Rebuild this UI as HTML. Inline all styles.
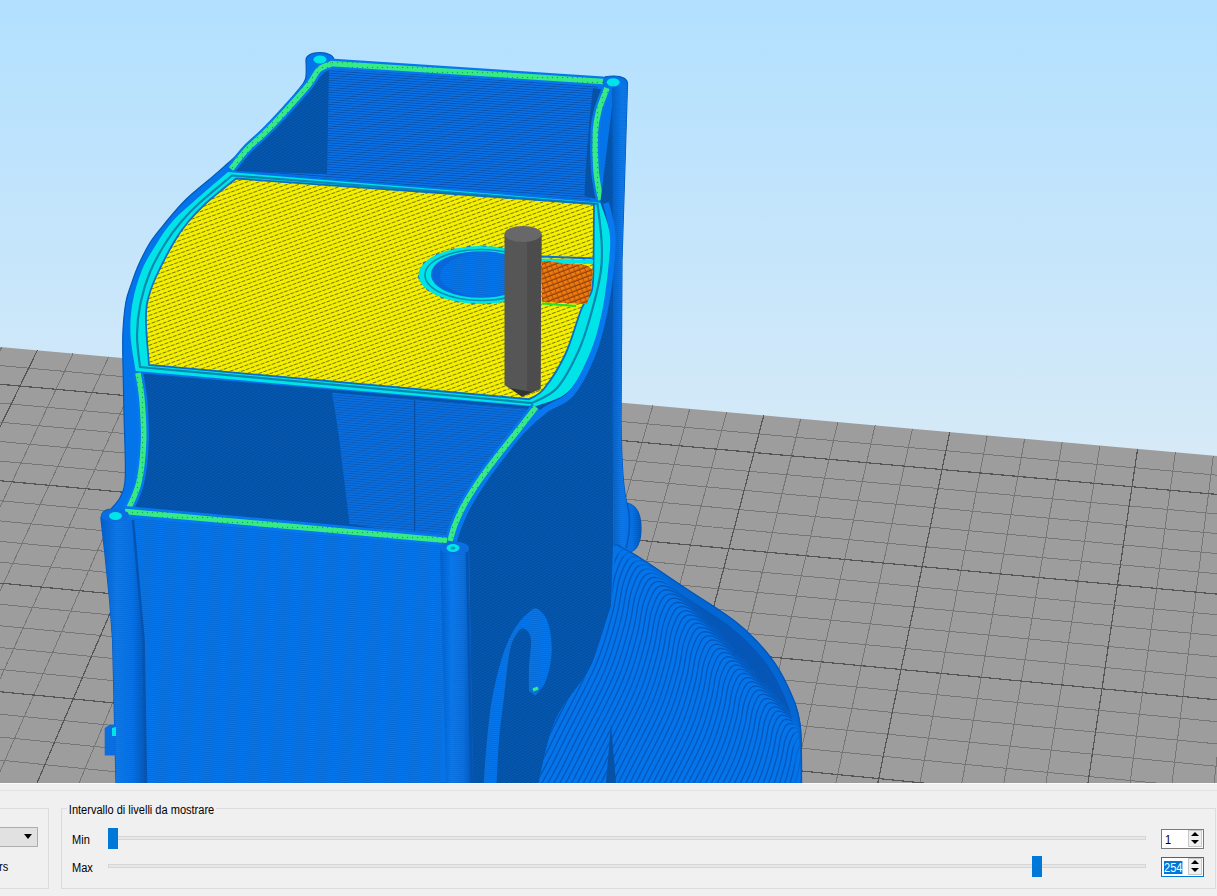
<!DOCTYPE html><html><head><meta charset="utf-8"><style>
html,body{margin:0;padding:0;width:1217px;height:896px;overflow:hidden;background:#f0f0f0;font-family:"Liberation Sans",sans-serif;}
svg{position:absolute;left:0;top:0;display:block}
.t{position:absolute;font-size:12px;color:#000;white-space:nowrap;line-height:14px;transform:scaleX(0.92);transform-origin:0 0}
.b{position:absolute;box-sizing:border-box}
</style></head><body>
<svg width="1217" height="783" viewBox="0 0 1217 783">
<defs>
<linearGradient id="sky" x1="0" y1="0" x2="0" y2="1"><stop offset="0" stop-color="#b2e0ff"/><stop offset="1" stop-color="#f0f1f2"/></linearGradient>
<pattern id="yel" width="5.2" height="4" patternUnits="userSpaceOnUse" patternTransform="rotate(-20)"><rect width="5.2" height="4" fill="#f4f000"/><rect x="0.6" y="3.05" width="4" height="0.95" fill="#747000"/></pattern>
<pattern id="wL" width="8" height="2" patternUnits="userSpaceOnUse" patternTransform="rotate(5)"><rect width="8" height="2" fill="#0678f0"/><rect y="1.35" width="8" height="0.65" fill="#0562c6"/></pattern>
<pattern id="wB" width="8" height="2.4" patternUnits="userSpaceOnUse" patternTransform="rotate(4)"><rect width="8" height="2.4" fill="#0a70e4"/><rect y="1.6" width="8" height="0.8" fill="#0852ae"/></pattern>
<pattern id="wD" width="8" height="2.4" patternUnits="userSpaceOnUse" patternTransform="rotate(-30)"><rect width="8" height="2.4" fill="#0458b2"/><rect y="1.7" width="8" height="0.7" fill="#034a98"/></pattern>
<pattern id="wM" width="8" height="2.4" patternUnits="userSpaceOnUse" patternTransform="rotate(5)"><rect width="8" height="2.4" fill="#0a6ede"/><rect y="1.7" width="8" height="0.7" fill="#0858b6"/></pattern>
<pattern id="orng" width="5" height="4.6" patternUnits="userSpaceOnUse" patternTransform="rotate(-21)"><rect width="5" height="4.6" fill="#f07a10"/><rect y="3.3" width="5" height="1.3" fill="#8a4006"/><rect x="3.8" y="0" width="1.2" height="3.3" fill="#b85808"/></pattern>
<linearGradient id="cyl" x1="0" y1="0" x2="1" y2="0"><stop offset="0" stop-color="#0562cc"/><stop offset="0.35" stop-color="#0a7ef6"/><stop offset="0.7" stop-color="#0874ea"/><stop offset="1" stop-color="#0558b8"/></linearGradient>
<pattern id="stp" width="8" height="2" patternUnits="userSpaceOnUse" patternTransform="rotate(3)"><rect y="1.3" width="8" height="0.7" fill="#03408a" fill-opacity="0.35"/></pattern>
<pattern id="grn" width="5" height="5" patternUnits="userSpaceOnUse"><rect width="5" height="5" fill="#36ea86"/><circle cx="2.5" cy="2.5" r="0.7" fill="#24a060"/></pattern>
</defs>
<rect x="0" y="0" width="1217" height="783" fill="url(#sky)"/>
<polygon points="-69.2,340.9 1365.5,469.4 1306.1,1203.9 -420.8,1016" fill="#9d9d9d"/>
<path d="M-69.2,340.9 L-420.8,1016 M-33.8,344 L-378.4,1020.6 M1.7,347.2 L-336,1025.2 M73,353.6 L-250.8,1034.5 M108.7,356.8 L-208.1,1039.1 M144.5,360 L-165.3,1043.8 M180.3,363.2 L-122.3,1048.5 M252.3,369.7 L-36.2,1057.8 M288.3,372.9 L7,1062.5 M324.5,376.1 L50.4,1067.3 M360.7,379.4 L93.8,1072 M433.3,385.9 L181,1081.5 M469.7,389.1 L224.7,1086.2 M506.2,392.4 L268.5,1091 M542.8,395.7 L312.5,1095.8 M616.1,402.3 L400.7,1105.4 M652.9,405.5 L444.9,1110.2 M689.8,408.8 L489.3,1115 M726.7,412.2 L533.8,1119.9 M800.7,418.8 L623,1129.6 M837.9,422.1 L667.8,1134.5 M875.1,425.4 L712.7,1139.3 M912.4,428.8 L757.7,1144.2 M987.2,435.5 L848,1154.1 M1024.7,438.8 L893.3,1159 M1062.2,442.2 L938.7,1163.9 M1099.9,445.6 L984.3,1168.9 M1175.4,452.3 L1075.7,1178.8 M1213.3,455.7 L1121.5,1183.8 M1251.2,459.1 L1167.5,1188.8 M1289.3,462.5 L1213.6,1193.9 M1365.5,469.4 L1306.1,1203.9 M-78.4,358.5 L1364,488.4 M-97,394.2 L1360.9,527 M-106.5,412.4 L1359.3,546.6 M-116.1,430.8 L1357.7,566.5 M-125.7,449.4 L1356.1,586.6 M-145.4,487.1 L1352.7,627.5 M-155.4,506.3 L1351.1,648.3 M-165.5,525.7 L1349.4,669.3 M-175.7,545.4 L1347.6,690.6 M-196.5,585.3 L1344.1,734 M-207.1,605.6 L1342.3,756.1 M-217.8,626.2 L1340.5,778.4 M-228.6,647 L1338.7,801 M-250.7,689.3 L1335,847 M-261.9,710.8 L1333.1,870.5 M-273.2,732.6 L1331.2,894.2 M-284.7,754.7 L1329.2,918.2 M-308.1,799.6 L1325.2,967.2 M-320,822.5 L1323.2,992.2 M-332.1,845.6 L1321.2,1017.4 M-344.3,869.1 L1319.1,1043.1 M-369.1,916.8 L1314.9,1095.3 M-381.8,941.1 L1312.7,1121.9 M-394.6,965.8 L1310.5,1148.9 M-407.6,990.7 L1308.3,1176.2" stroke="#767676" stroke-width="1" fill="none" shape-rendering="crispEdges"/>
<path d="M37.3,350.4 L-293.5,1029.8 M216.3,366.4 L-79.3,1053.1 M397,382.6 L137.3,1076.7 M579.4,399 L356.5,1100.6 M763.7,415.5 L578.3,1124.7 M949.7,432.1 L802.8,1149.1 M1137.6,449 L1029.9,1173.9 M1327.4,466 L1259.8,1198.9 M-87.7,376.3 L1362.5,507.6 M-135.5,468.1 L1354.4,606.9 M-186.1,565.2 L1345.9,712.2 M-239.6,668 L1336.8,823.9 M-296.3,777 L1327.2,942.6 M-356.6,892.8 L1317,1069 M-420.8,1016 L1306.1,1203.9" stroke="#555555" stroke-width="1.2" fill="none" shape-rendering="crispEdges"/>
<path d="M320,52.5 C328,52.5 334,56 334,60 L601,79 C603,77 608,76 614,76 C622,76 627.5,79 627.5,84 L622,260 L621,420 C621.5,460 623,490 627,503 C636,505 641,514 641,528 C641,542 637,550 630,552 L616,544 C617.8,546 624.9,548.5 637,556 C649.1,563.5 670,578 686.5,589 C703,600 722.1,611 735.8,622 C749.5,633 759.9,644 768.7,655 C777.5,666 783.2,676.5 788.4,688 C793.6,699.5 797.8,708.2 800,724 C802.2,739.8 801.2,773.2 801.5,783 L116,783 L112.6,640 L109.6,600 L104.6,551 L101,519 C101,513 105,509 111,509 C112.6,507 118,502.3 120.4,497 C122.8,491.7 124.7,491 125.3,477 C125.9,463 124.4,433.2 124,413 C123.6,392.8 123,369.8 122.8,356 C122.6,342.2 122.5,338.9 123,330 C123.5,321.1 124.5,310 125.8,302.5 C127.1,295 128.9,291.2 131,285 C133.1,278.8 135.3,272.1 138.5,265 C141.7,257.9 145.5,249.7 150.1,242.5 C154.7,235.3 160.7,228.5 166,222 C171.3,215.5 177.5,208.3 182,203.5 C186.5,198.7 188.7,196.8 193,193 C197.3,189.2 202.3,185.3 208,180.5 C213.7,175.7 220.5,169.7 227,164 C233.5,158.3 240.5,152.3 246.9,146.2 C253.3,140.2 259.4,134 265.6,127.5 C271.9,121 279.2,113.2 284.4,107.2 C289.6,101.2 293.4,96.3 296.9,91.6 C300.4,86.9 304,84.3 305.5,79 C307,73.7 305.9,63.2 306,60 C306,56 311,52.5 320,52.5 Z" fill="#0474ea" stroke="#0558bc" stroke-width="1.2"/>
<path d="M329,66 L598,84 L590,200 L233,171 Z" fill="url(#wB)"/>
<path d="M233,171 C236.7,168.7 244.3,158.3 250,152 C255.7,145.7 261.2,141 268,134 C274.8,127 283.5,118.2 291,110 C298.5,101.8 306.7,92 313,85 C319.3,78 326.3,70.8 329,68 L327,174 Z" fill="url(#wD)"/>
<path d="M593,88 C590,110 586,160 584.6,196 L600,200 C598,160 599,120 606,90 Z" fill="#0852a6"/>
<path d="M606,90 C598,120 596,160 600,200" stroke="#0a6ee0" stroke-width="4" fill="none"/>
<path d="M330,63.5 L603,81.5" stroke="#0878ee" stroke-width="10" fill="none"/>
<path d="M330,63.5 L603,81.5" stroke="url(#grn)" stroke-width="5.5" fill="none"/>
<path d="M231,169 C233.7,165.7 241.2,155.6 247,149.4 C252.8,143.2 258.9,138.8 265.6,132 C272.4,125.2 280.2,116.8 287.5,108.8 C294.8,100.7 304.2,90.3 309.4,83.8 C314.6,77.2 315.1,73 318.8,69.7 C322.4,66.4 329,65 331,64" stroke="#0878ee" stroke-width="10" fill="none"/>
<path d="M231,169 C233.7,165.7 241.2,155.6 247,149.4 C252.8,143.2 258.9,138.8 265.6,132 C272.4,125.2 280.2,116.8 287.5,108.8 C294.8,100.7 304.2,90.3 309.4,83.8 C314.6,77.2 315.1,73 318.8,69.7 C322.4,66.4 329,65 331,64" stroke="url(#grn)" stroke-width="5.5" fill="none"/>
<path d="M607,88 C605.7,91.7 600.9,102.8 599,110 C597.1,117.2 595.9,121.4 595.4,131.4 C594.9,141.4 595.1,158.6 596,170 C596.9,181.4 599.9,195 600.7,200" stroke="#0878ee" stroke-width="10" fill="none"/>
<path d="M607,88 C605.7,91.7 600.9,102.8 599,110 C597.1,117.2 595.9,121.4 595.4,131.4 C594.9,141.4 595.1,158.6 596,170 C596.9,181.4 599.9,195 600.7,200" stroke="url(#grn)" stroke-width="5.5" fill="none"/>
<path d="M600.3,202.8 L614,90 L613,260 L613,420 L613,546 L611,606 C609.2,611.7 603.8,629.1 600,640 C596.2,650.9 595.5,658 588,671.5 C580.5,685 563.2,702.4 555,721 C546.8,739.6 541.3,772.7 538.6,783 L473,783 L469,550 L449,541 C450,538.3 452.4,531 454.9,525 C457.4,519 460,512.5 464.1,505 C468.2,497.5 474,488.3 479.7,480 C485.4,471.7 491.9,463.3 498.3,455 C504.7,446.7 512,438.1 518.2,430 C524.4,421.9 532.8,410.2 535.7,406.2 C541.1,403.8 559.2,400.2 568.2,391.5 C577.2,382.8 584,366.9 589.6,354 C595.2,341.1 598.5,328.1 601.6,313.8 C604.7,299.5 606.9,281.4 608.3,268 C609.6,254.6 609.5,239.2 609.7,233.5 Z" fill="url(#wD)"/>
<path d="M612,88 L627.5,84 L622,260 L621,420 C621.5,460 623,490 627,503 C636,505 641,514 641,528 C641,542 637,550 630,552 L613,546 C614,530 613,470 612.5,420 L613,260 Z" fill="url(#cyl)"/>
<path d="M612,88 L627.5,84 L622,260 L621,420 C621.5,460 623,490 627,503 C636,505 641,514 641,528 C641,542 637,550 630,552 L613,546 C614,530 613,470 612.5,420 L613,260 Z" fill="url(#stp)"/>
<path d="M627,503 C630,512 631,530 626,548" stroke="#0558b8" stroke-width="1.5" fill="none"/>
<path d="M606,203 C607.1,208 611.7,222.2 612.5,233 C613.3,243.8 612.4,254.5 611,268 C609.6,281.5 607.2,299.3 604,314 C600.8,328.7 597.5,342.7 592,356 C586.5,369.3 578.8,385 571,394 C563.2,403 553.2,403.8 545,410 C536.8,416.2 529.2,423.3 522,431 C514.8,438.7 508.4,447.7 502,456 C495.6,464.3 489.2,472.7 483.5,481 C477.8,489.3 472.1,498.5 468,506 C463.9,513.5 461.3,520.2 459,526 C456.7,531.8 454.8,538.5 454,541" stroke="#0878ee" stroke-width="6" fill="none"/>
<path d="M228,172 L600.3,202.8 C601.9,207.9 608.4,222.6 609.7,233.5 C611,244.4 609.6,254.6 608.3,268 C606.9,281.4 604.7,299.5 601.6,313.8 C598.5,328.1 595.2,341.1 589.6,354 C584,366.9 577.2,382.8 568.2,391.5 C559.2,400.2 541.1,403.8 535.7,406.2 L135.7,371 C134.8,365 131,346.4 130.5,335 C130,323.6 130.7,313.3 132.6,302.5 C134.5,291.7 137.9,280 142,270 C146.1,260 152.4,250.5 157.4,242.5 C162.4,234.5 166.1,228.7 172,222 C177.9,215.3 183.4,210.8 192.7,202.5 C202,194.2 222.1,177.1 228,172 Z" fill="#00e4e8"/>
<path d="M232,175.5 L597.5,204 C598.2,210 600.9,229 601.5,240 C602.1,251 602.6,258 601,270 C599.4,282 595.4,298.5 591.6,312 C587.9,325.5 584.3,338.3 578.5,351 C572.7,363.7 564.8,379.3 557,388 C549.2,396.7 536.2,400.5 532,403 L140,367 C139.5,361.7 136.9,345.8 137,335 C137.1,324.2 138.4,313 140.6,302.5 C142.8,292 145.8,282 150,272 C154.2,262 160.6,250.8 165.8,242.5 C171,234.2 175.3,228.7 181,222 C186.7,215.3 191.5,210.2 200,202.5 C208.5,194.8 226.7,180 232,175.5 Z" fill="none" stroke="#0788b0" stroke-width="2.2"/>
<path d="M236,178.5 L594,204 L593.6,257.6 C593.3,263 594,281.5 592,290 C590,298.5 586,297.8 581.6,308.5 C577.2,319.2 571.8,340.6 565.5,354 C559.2,367.4 550,381.3 544,388.8 C538,396.3 531.7,397.5 529.2,399.2 L149,365 C148.5,358.2 146.3,334.4 146,324 C145.7,313.6 145.7,310 147.2,302.5 C148.7,295 150.6,289 155,279 C159.4,269 168.2,252 173.7,242.5 C179.2,233 182.5,228.7 188,222 C193.5,215.3 198.7,209.8 206.7,202.5 C214.7,195.2 231.1,182.5 236,178.5 Z" fill="url(#yel)" stroke="#0a6ec8" stroke-width="1.8"/>
<ellipse cx="481" cy="275" rx="62.5" ry="29" fill="#00e4e8"/>
<ellipse cx="481" cy="275" rx="56" ry="25.5" fill="none" stroke="#0790b0" stroke-width="1.6"/>
<ellipse cx="481" cy="274.5" rx="49" ry="22.3" fill="url(#wL)"/>
<ellipse cx="481" cy="274.5" rx="49" ry="22.3" fill="none" stroke="#0a6ee0" stroke-width="2"/>
<path d="M433,274 C433,262 450,254 470,253 C452,258 440,266 440,276 C440,284 450,291 470,296 C448,294 433,286 433,274 Z" fill="#0866d8"/>
<ellipse cx="481" cy="275" rx="62.5" ry="29" fill="none" stroke="#0a70d8" stroke-width="1" stroke-dasharray="4 12"/>
<path d="M541,256.5 L594,258.5" stroke="#0a6ee0" stroke-width="2.2" fill="none"/>
<path d="M541,260.5 L593,262" stroke="#00e4e8" stroke-width="4" fill="none"/>
<path d="M542,261 L548,261 L561,263 L586,265 L593,270 L591,290 L587,304 L542,302 Z" fill="url(#orng)"/>
<path d="M542,303.5 L576,306" stroke="#20e030" stroke-width="2.2" fill="none"/>
<path d="M137,373 L535,407 C532.2,410.8 524.3,422 518.2,430 C512.1,438 504.7,446.7 498.3,455 C491.9,463.3 485.4,471.7 479.7,480 C474,488.3 468.2,497.5 464.1,505 C460,512.5 457.4,519.2 454.9,525 C452.4,530.8 450,537.5 449,540 L130,509 C131.7,504.2 137.7,491.3 140,480 C142.3,468.7 143.4,454.3 143.6,441 C143.8,427.7 141.6,411.3 141,400 C140.4,388.7 140.2,377.5 140,373 Z" fill="url(#wD)"/>
<path d="M332,392.5 L530,409 C527.7,412.5 521.7,422.3 516,430 C510.3,437.7 502.4,446.7 496,455 C489.6,463.3 483.2,471.7 477.5,480 C471.8,488.3 466.1,497.5 462,505 C457.9,512.5 455.5,519.3 453,525 C450.5,530.7 448,536.7 447,539 L349.6,524 C348.5,515 344.9,485.7 343,470 C341.1,454.3 339.8,442.9 338,430 C336.2,417.1 333,398.8 332,392.5 Z" fill="url(#wM)"/>
<path d="M414.7,400 L414.7,531" stroke="#074a98" stroke-width="1" fill="none"/>
<path d="M536,407 C533,410.8 524.5,422 518.2,430 C511.9,438 504.7,446.7 498.3,455 C491.9,463.3 485.4,471.7 479.7,480 C474,488.3 468.2,497.5 464.1,505 C460,512.5 457.2,519 454.9,525 C452.5,531 450.8,538.3 450,541" stroke="#0878ee" stroke-width="10.5" fill="none"/>
<path d="M536,407 C533,410.8 524.5,422 518.2,430 C511.9,438 504.7,446.7 498.3,455 C491.9,463.3 485.4,471.7 479.7,480 C474,488.3 468.2,497.5 464.1,505 C460,512.5 457.2,519 454.9,525 C452.5,531 450.8,538.3 450,541" stroke="url(#grn)" stroke-width="5.5" fill="none"/>
<path d="M138,373 C138.7,377.5 141.1,388.7 142,400 C142.9,411.3 144.1,427.3 143.6,441 C143.1,454.7 141.6,470.5 139,482 C136.4,493.5 129.8,505.3 128,510" stroke="#0878ee" stroke-width="10.5" fill="none"/>
<path d="M138,373 C138.7,377.5 141.1,388.7 142,400 C142.9,411.3 144.1,427.3 143.6,441 C143.1,454.7 141.6,470.5 139,482 C136.4,493.5 129.8,505.3 128,510" stroke="url(#grn)" stroke-width="5.5" fill="none"/>
<path d="M126.8,512 L446,541 L441,783 L146,783 L143,660 L133,520 Z" fill="url(#wL)"/>
<path d="M125,511.5 L447,540.5" stroke="#0878ee" stroke-width="11" fill="none"/>
<path d="M125,511.5 L447,540.5" stroke="url(#grn)" stroke-width="5.5" fill="none"/>
<clipPath id="bc"><path d="M616,544 C617.8,546 624.9,548.5 637,556 C649.1,563.5 670,578 686.5,589 C703,600 722.1,611 735.8,622 C749.5,633 759.9,644 768.7,655 C777.5,666 783.2,676.5 788.4,688 C793.6,699.5 797.8,708.2 800,724 C802.2,739.8 801.2,773.2 801.5,783 L538.6,783 C541.3,772.7 546.8,739.6 555,721 C563.2,702.4 580.5,685 588,671.5 C595.5,658 596.2,650.9 600,640 C603.8,629.1 609.2,611.7 611,606 Z"/></clipPath>
<path d="M616,544 C617.8,546 624.9,548.5 637,556 C649.1,563.5 670,578 686.5,589 C703,600 722.1,611 735.8,622 C749.5,633 759.9,644 768.7,655 C777.5,666 783.2,676.5 788.4,688 C793.6,699.5 797.8,708.2 800,724 C802.2,739.8 801.2,773.2 801.5,783 L538.6,783 C541.3,772.7 546.8,739.6 555,721 C563.2,702.4 580.5,685 588,671.5 C595.5,658 596.2,650.9 600,640 C603.8,629.1 609.2,611.7 611,606 Z" fill="#0474ea"/>
<g clip-path="url(#bc)"><path d="M474.8,838.9 L479.9,833.6 L487,826.4 L495.3,817.8 L504.2,808.2 L512.7,798.3 L520.2,788.4 L526.8,778.3 L532.9,767.6 L538.7,756.5 L544.4,745.2 L550,733.9 L555.6,722.8 L561.3,711.6 L567.2,700.3 L573,689 L578.5,677.9 L583.5,667.2 L587.9,657.1 L591.6,647.7 L594.8,638.7 L597.5,630.1 L599.9,622 L602,614.1 L604.1,606.6 L605.8,599.3 L607.1,592.2 L608.2,585.5 L609.3,579.2 L610.6,573.4 L612.2,568.2 L614,563.4 L615.8,558.9 L617.8,554.8 L620.2,551.5 L622.9,549.2 L626.3,548 L630.3,548.2 L634.8,549.6 L639.8,552 L645.2,555.1 L650.8,558.5 L656.6,562.2 L662.7,566.1 L669.1,570.7 L675.9,575.6 L682.8,580.8 L689.9,586.2 L697,591.5 L704.4,596.7 L712.2,602.1 L720.2,607.6 L728,613.2 L735.5,618.9 L742.5,624.8 L748.9,630.7 L755,636.8 L760.8,643 L766.2,649.3 L771.2,655.7 L775.8,662.1 L779.8,668.5 L783.4,674.8 L786.5,681.2 L789.3,687.8 L791.7,694.9 L794,702.5 L795.9,710.8 L797.4,719.4 L798.6,728.4 L799.6,737.9 L800.4,747.8 L801,758.1 L801.4,769.8 L801.6,783.2 L801.5,796.9 L801.3,809.9 L801.1,820.9 L801,828.8 M480.3,840.1 L485.3,834.8 L492.3,827.7 L500.6,819.1 L509.3,809.7 L517.8,799.9 L525.2,790.1 L531.7,780.1 L537.7,769.5 L543.5,758.5 L549.2,747.3 L554.7,736.1 L560.2,725.1 L565.9,714.1 L571.7,702.9 L577.4,691.7 L582.8,680.7 L587.8,670.1 L592.2,660.1 L595.9,650.8 L599,641.9 L601.7,633.5 L604,625.4 L606.2,617.6 L608.2,610.2 L609.9,602.9 L611.2,596 L612.3,589.3 L613.4,583.1 L614.6,577.3 L616.2,572.2 L618,567.4 L619.8,562.9 L621.8,558.9 L624.1,555.7 L626.9,553.4 L630.2,552.2 L634.1,552.4 L638.6,553.8 L643.6,556.1 L648.8,559.2 L654.4,562.6 L660.2,566.2 L666.2,570.1 L672.6,574.6 L679.2,579.5 L686.1,584.7 L693.1,589.9 L700.1,595.2 L707.5,600.4 L715.2,605.7 L723.1,611.2 L730.8,616.7 L738.3,622.4 L745.1,628.2 L751.5,634.1 L757.6,640.1 L763.3,646.2 L768.7,652.4 L773.6,658.8 L778.1,665.1 L782.1,671.5 L785.6,677.7 L788.7,684 L791.5,690.6 L793.9,697.6 L796.1,705.1 L798,713.2 L799.5,721.8 L800.7,730.7 L801.7,740.1 L802.5,749.9 L803.1,760.1 L803.5,771.7 L803.6,784.9 L803.5,798.5 L803.4,811.4 L803.2,822.3 L803.1,830.1 M485.7,841.2 L490.7,836 L497.6,828.9 L505.8,820.5 L514.5,811.2 L522.9,801.4 L530.2,791.8 L536.6,781.9 L542.6,771.4 L548.3,760.5 L553.9,749.5 L559.4,738.4 L564.8,727.5 L570.5,716.6 L576.2,705.5 L581.8,694.4 L587.2,683.5 L592.2,673 L596.5,663.2 L600.1,654 L603.2,645.2 L605.9,636.8 L608.2,628.8 L610.3,621.1 L612.3,613.7 L614,606.6 L615.3,599.7 L616.4,593.1 L617.4,586.9 L618.7,581.3 L620.2,576.2 L622,571.4 L623.8,567 L625.8,563.1 L628.1,559.8 L630.8,557.5 L634.1,556.4 L638,556.6 L642.4,558 L647.3,560.3 L652.5,563.3 L658,566.7 L663.7,570.2 L669.7,574.1 L676,578.5 L682.6,583.4 L689.4,588.5 L696.3,593.7 L703.3,598.9 L710.6,604.1 L718.2,609.3 L726,614.7 L733.7,620.2 L741,625.8 L747.8,631.5 L754.1,637.4 L760.1,643.3 L765.8,649.4 L771.1,655.6 L776,661.8 L780.4,668.1 L784.4,674.4 L787.9,680.6 L791,686.8 L793.7,693.3 L796.1,700.2 L798.2,707.7 L800.1,715.7 L801.6,724.2 L802.8,733 L803.8,742.3 L804.5,752 L805.2,762.1 L805.6,773.6 L805.7,786.6 L805.6,800.1 L805.4,812.8 L805.2,823.6 L805.2,831.3 M491.2,842.4 L496.1,837.2 L503,830.2 L511.1,821.9 L519.6,812.6 L527.9,803 L535.2,793.4 L541.5,783.7 L547.5,773.3 L553.1,762.6 L558.6,751.6 L564,740.6 L569.5,729.8 L575,719.1 L580.7,708.1 L586.3,697.1 L591.6,686.3 L596.5,676 L600.8,666.2 L604.4,657.1 L607.4,648.4 L610.1,640.1 L612.4,632.2 L614.5,624.6 L616.4,617.3 L618.1,610.2 L619.4,603.4 L620.5,596.9 L621.5,590.8 L622.7,585.2 L624.3,580.1 L626,575.5 L627.8,571.1 L629.8,567.2 L632,564 L634.7,561.7 L638,560.6 L641.8,560.7 L646.2,562.1 L651,564.4 L656.2,567.4 L661.7,570.7 L667.3,574.3 L673.2,578.1 L679.5,582.5 L686,587.3 L692.7,592.3 L699.5,597.5 L706.5,602.6 L713.6,607.7 L721.2,613 L728.9,618.3 L736.5,623.7 L743.8,629.3 L750.5,634.9 L756.7,640.7 L762.7,646.6 L768.3,652.6 L773.5,658.7 L778.4,664.9 L782.8,671.1 L786.7,677.3 L790.1,683.4 L793.2,689.6 L795.9,696 L798.2,702.9 L800.4,710.3 L802.2,718.2 L803.7,726.6 L804.9,735.3 L805.9,744.5 L806.6,754.1 L807.2,764.1 L807.6,775.4 L807.7,788.4 L807.7,801.7 L807.5,814.3 L807.3,825 L807.2,832.6 M496.6,843.5 L501.5,838.4 L508.3,831.5 L516.3,823.3 L524.8,814.1 L533,804.6 L540.2,795.1 L546.4,785.5 L552.3,775.2 L557.9,764.6 L563.4,753.7 L568.7,742.9 L574.1,732.2 L579.6,721.5 L585.2,710.7 L590.7,699.8 L596,689.2 L600.8,678.9 L605.1,669.3 L608.6,660.2 L611.7,651.6 L614.3,643.4 L616.5,635.6 L618.6,628.1 L620.5,620.9 L622.2,613.9 L623.5,607.1 L624.5,600.7 L625.6,594.6 L626.8,589.1 L628.3,584.1 L630,579.5 L631.8,575.1 L633.7,571.3 L636,568.1 L638.6,565.9 L641.8,564.7 L645.7,564.9 L650,566.3 L654.8,568.5 L659.9,571.5 L665.3,574.8 L670.9,578.3 L676.7,582.1 L682.9,586.4 L689.3,591.2 L696,596.2 L702.8,601.3 L709.6,606.4 L716.7,611.4 L724.2,616.6 L731.8,621.8 L739.3,627.2 L746.5,632.7 L753.2,638.3 L759.3,644 L765.2,649.8 L770.8,655.8 L776,661.8 L780.8,667.9 L785.1,674.1 L789,680.2 L792.4,686.3 L795.4,692.4 L798,698.8 L800.4,705.5 L802.5,712.8 L804.4,720.7 L805.8,729 L807,737.6 L807.9,746.7 L808.7,756.2 L809.3,766.1 L809.7,777.3 L809.8,790.1 L809.7,803.3 L809.6,815.7 L809.4,826.3 L809.3,833.8 M502.1,844.7 L506.9,839.6 L513.6,832.8 L521.5,824.6 L529.9,815.6 L538.1,806.2 L545.2,796.8 L551.4,787.3 L557.2,777.1 L562.7,766.6 L568.1,755.8 L573.4,745.1 L578.7,734.6 L584.2,724 L589.7,713.3 L595.2,702.5 L600.4,692 L605.2,681.9 L609.3,672.3 L612.9,663.4 L615.9,654.9 L618.4,646.8 L620.7,639 L622.7,631.6 L624.7,624.5 L626.3,617.5 L627.6,610.8 L628.6,604.5 L629.6,598.5 L630.8,593 L632.3,588.1 L634,583.5 L635.8,579.2 L637.7,575.4 L639.9,572.2 L642.5,570 L645.7,568.9 L649.5,569.1 L653.8,570.4 L658.5,572.7 L663.6,575.6 L668.9,578.9 L674.5,582.3 L680.2,586.1 L686.3,590.4 L692.7,595.1 L699.3,600 L706,605.1 L712.8,610.1 L719.8,615.1 L727.2,620.2 L734.7,625.4 L742.1,630.7 L749.3,636.2 L755.8,641.7 L761.9,647.3 L767.8,653.1 L773.3,659 L778.4,664.9 L783.1,671 L787.4,677.1 L791.3,683.2 L794.6,689.1 L797.6,695.2 L800.2,701.5 L802.6,708.2 L804.7,715.4 L806.5,723.2 L807.9,731.4 L809.1,739.9 L810,748.9 L810.8,758.3 L811.4,768.1 L811.8,779.2 L811.9,791.8 L811.8,804.9 L811.6,817.2 L811.5,827.6 L811.4,835.1 M507.6,845.8 L512.3,840.8 L519,834.1 L526.8,826 L535.1,817.1 L543.1,807.7 L550.2,798.5 L556.3,789 L562,779 L567.5,768.6 L572.8,758 L578.1,747.3 L583.3,736.9 L588.7,726.5 L594.2,715.9 L599.6,705.3 L604.8,694.8 L609.5,684.8 L613.6,675.4 L617.1,666.5 L620.1,658.1 L622.6,650.1 L624.8,642.4 L626.9,635.1 L628.8,628 L630.4,621.2 L631.7,614.6 L632.7,608.3 L633.7,602.3 L634.8,596.9 L636.4,592 L638.1,587.5 L639.8,583.3 L641.7,579.5 L643.9,576.4 L646.5,574.2 L649.6,573.1 L653.4,573.3 L657.6,574.6 L662.3,576.8 L667.3,579.7 L672.6,582.9 L678,586.4 L683.7,590.1 L689.8,594.3 L696.1,599 L702.6,603.9 L709.2,608.9 L715.9,613.8 L722.9,618.8 L730.2,623.8 L737.6,629 L745,634.2 L752,639.6 L758.5,645.1 L764.5,650.7 L770.3,656.4 L775.7,662.2 L780.8,668.1 L785.5,674.1 L789.8,680.1 L793.5,686.1 L796.9,692 L799.8,698 L802.4,704.2 L804.7,710.8 L806.8,718 L808.6,725.7 L810,733.8 L811.2,742.3 L812.1,751.1 L812.8,760.4 L813.4,770.1 L813.8,781.1 L813.9,793.6 L813.9,806.5 L813.7,818.6 L813.5,829 L813.4,836.4 M513,847 L517.7,842.1 L524.3,835.4 L532,827.4 L540.2,818.5 L548.2,809.3 L555.2,800.2 L561.2,790.8 L566.9,780.9 L572.3,770.6 L577.6,760.1 L582.7,749.6 L587.9,739.3 L593.3,729 L598.7,718.5 L604,708 L609.1,697.7 L613.8,687.7 L617.9,678.4 L621.4,669.7 L624.3,661.3 L626.8,653.4 L629,645.8 L631,638.6 L632.9,631.6 L634.5,624.8 L635.7,618.3 L636.8,612 L637.7,606.2 L638.9,600.8 L640.4,596 L642.1,591.5 L643.8,587.3 L645.7,583.6 L647.8,580.5 L650.4,578.4 L653.5,577.3 L657.2,577.5 L661.4,578.8 L666,581 L671,583.8 L676.2,587 L681.6,590.4 L687.2,594.1 L693.2,598.3 L699.4,602.9 L705.9,607.7 L712.4,612.6 L719,617.5 L725.9,622.4 L733.2,627.4 L740.5,632.5 L747.8,637.7 L754.8,643 L761.2,648.4 L767.2,654 L772.8,659.6 L778.2,665.4 L783.3,671.2 L787.9,677.1 L792.1,683.1 L795.8,689 L799.1,694.9 L802,700.8 L804.6,706.9 L806.9,713.5 L809,720.6 L810.7,728.2 L812.1,736.2 L813.3,744.6 L814.2,753.3 L814.9,762.5 L815.5,772.1 L815.9,782.9 L816,795.3 L815.9,808.1 L815.8,820.1 L815.6,830.3 L815.5,837.6 M518.5,848.1 L523.1,843.3 L529.6,836.7 L537.3,828.8 L545.4,820 L553.3,810.9 L560.1,801.8 L566.1,792.6 L571.7,782.8 L577.1,772.6 L582.3,762.2 L587.4,751.8 L592.6,741.6 L597.8,731.5 L603.2,721.1 L608.5,710.7 L613.5,700.5 L618.1,690.7 L622.2,681.5 L625.6,672.8 L628.5,664.6 L631,656.7 L633.2,649.3 L635.1,642.1 L637,635.2 L638.6,628.5 L639.8,622 L640.8,615.8 L641.8,610.1 L642.9,604.7 L644.4,600 L646.1,595.6 L647.8,591.4 L649.6,587.7 L651.8,584.7 L654.3,582.5 L657.4,581.5 L661,581.6 L665.2,582.9 L669.8,585.1 L674.7,587.9 L679.8,591.1 L685.2,594.4 L690.7,598 L696.6,602.2 L702.8,606.7 L709.2,611.5 L715.7,616.4 L722.2,621.3 L729,626.1 L736.2,631 L743.4,636.1 L750.6,641.2 L757.5,646.5 L763.9,651.8 L769.8,657.3 L775.4,662.9 L780.7,668.6 L785.7,674.3 L790.3,680.2 L794.4,686.1 L798.1,691.9 L801.4,697.7 L804.3,703.6 L806.8,709.7 L809.1,716.1 L811.1,723.1 L812.8,730.7 L814.3,738.6 L815.4,746.9 L816.3,755.5 L817,764.6 L817.6,774.1 L818,784.8 L818.1,797 L818,809.7 L817.8,821.6 L817.7,831.7 L817.6,838.9 M523.9,849.3 L528.5,844.5 L535,837.9 L542.5,830.1 L550.6,821.5 L558.3,812.5 L565.1,803.5 L571,794.4 L576.6,784.7 L581.9,774.6 L587,764.4 L592.1,754.1 L597.2,744 L602.4,733.9 L607.7,723.7 L612.9,713.4 L617.9,703.3 L622.5,693.6 L626.5,684.5 L629.8,676 L632.7,667.8 L635.2,660.1 L637.3,652.7 L639.3,645.6 L641.1,638.7 L642.7,632.1 L643.9,625.7 L644.9,619.6 L645.9,613.9 L647,608.7 L648.4,603.9 L650.1,599.6 L651.8,595.5 L653.6,591.8 L655.7,588.8 L658.2,586.7 L661.3,585.6 L664.9,585.8 L669,587.1 L673.5,589.2 L678.4,592 L683.5,595.2 L688.7,598.4 L694.3,602 L700.1,606.1 L706.2,610.6 L712.5,615.4 L718.9,620.2 L725.4,625 L732.1,629.8 L739.2,634.7 L746.3,639.6 L753.5,644.7 L760.3,649.9 L766.5,655.2 L772.4,660.6 L777.9,666.1 L783.2,671.7 L788.1,677.5 L792.6,683.2 L796.8,689.1 L800.4,694.9 L803.6,700.6 L806.5,706.4 L809,712.4 L811.2,718.8 L813.2,725.7 L815,733.1 L816.4,741 L817.5,749.2 L818.4,757.7 L819.1,766.7 L819.6,776.1 L820,786.7 L820.1,798.8 L820,811.2 L819.9,823 L819.7,833 L819.6,840.1 M529.4,850.5 L533.9,845.7 L540.3,839.2 L547.8,831.5 L555.7,823 L563.4,814.1 L570.1,805.2 L576,796.2 L581.5,786.6 L586.7,776.6 L591.8,766.5 L596.8,756.3 L601.8,746.4 L607,736.4 L612.2,726.3 L617.4,716.1 L622.3,706.2 L626.8,696.6 L630.8,687.5 L634.1,679.1 L636.9,671.1 L639.4,663.4 L641.5,656.1 L643.4,649.1 L645.2,642.3 L646.8,635.8 L648,629.4 L649,623.4 L649.9,617.8 L651,612.6 L652.5,607.9 L654.1,603.6 L655.8,599.5 L657.6,595.9 L659.7,593 L662.1,590.9 L665.1,589.8 L668.7,590 L672.8,591.3 L677.3,593.4 L682,596.1 L687.1,599.2 L692.3,602.5 L697.8,606 L703.5,610.1 L709.6,614.5 L715.8,619.2 L722.1,624 L728.5,628.7 L735.2,633.5 L742.1,638.3 L749.3,643.2 L756.3,648.2 L763,653.4 L769.2,658.6 L775,663.9 L780.5,669.4 L785.7,674.9 L790.5,680.6 L795,686.3 L799.1,692.1 L802.7,697.8 L805.9,703.4 L808.7,709.2 L811.2,715.1 L813.4,721.4 L815.4,728.3 L817.1,735.6 L818.5,743.4 L819.6,751.5 L820.4,760 L821.1,768.8 L821.7,778 L822.1,788.6 L822.2,800.5 L822.1,812.8 L821.9,824.5 L821.8,834.4 L821.7,841.4 M534.9,851.6 L539.3,846.9 L545.6,840.5 L553,832.9 L560.9,824.4 L568.5,815.6 L575.1,806.9 L580.9,798 L586.3,788.5 L591.5,778.6 L596.5,768.6 L601.5,758.6 L606.4,748.7 L611.5,738.9 L616.7,728.9 L621.8,718.8 L626.7,709 L631.1,699.5 L635,690.6 L638.3,682.2 L641.1,674.3 L643.5,666.7 L645.6,659.5 L647.6,652.5 L649.4,645.9 L650.9,639.4 L652.1,633.1 L653,627.2 L654,621.6 L655.1,616.5 L656.5,611.9 L658.1,607.6 L659.8,603.6 L661.5,600 L663.6,597.1 L666.1,595 L669,594 L672.6,594.2 L676.6,595.4 L681,597.5 L685.7,600.2 L690.7,603.3 L695.9,606.5 L701.3,610 L707,614 L712.9,618.4 L719.1,623 L725.3,627.8 L731.7,632.5 L738.2,637.1 L745.1,641.9 L752.2,646.8 L759.1,651.7 L765.8,656.8 L771.9,662 L777.6,667.2 L783,672.6 L788.2,678.1 L793,683.7 L797.4,689.4 L801.4,695.1 L805,700.7 L808.1,706.3 L810.9,712 L813.4,717.8 L815.6,724.1 L817.5,730.8 L819.2,738.1 L820.6,745.8 L821.7,753.8 L822.5,762.2 L823.2,770.9 L823.8,780 L824.1,790.4 L824.2,802.2 L824.2,814.4 L824,825.9 L823.9,835.7 L823.8,842.7 M540.3,852.8 L544.8,848.1 L551,841.8 L558.3,834.3 L566,825.9 L573.5,817.2 L580.1,808.6 L585.8,799.8 L591.2,790.4 L596.3,780.7 L601.3,770.7 L606.1,760.8 L611,751.1 L616.1,741.4 L621.2,731.5 L626.2,721.5 L631,711.8 L635.5,702.4 L639.3,693.6 L642.6,685.4 L645.4,677.5 L647.7,670 L649.8,662.9 L651.7,656 L653.5,649.4 L655,643 L656.2,636.9 L657.1,631 L658.1,625.5 L659.1,620.4 L660.5,615.8 L662.1,611.6 L663.8,607.7 L665.5,604.1 L667.6,601.2 L670,599.2 L672.9,598.2 L676.4,598.3 L680.4,599.6 L684.7,601.6 L689.4,604.3 L694.3,607.4 L699.4,610.5 L704.8,614 L710.4,618 L716.3,622.3 L722.4,626.9 L728.5,631.5 L734.8,636.2 L741.3,640.8 L748.1,645.5 L755.1,650.3 L761.9,655.2 L768.5,660.2 L774.6,665.4 L780.2,670.6 L785.6,675.9 L790.7,681.3 L795.4,686.8 L799.8,692.4 L803.8,698.1 L807.3,703.6 L810.4,709.2 L813.1,714.7 L815.6,720.6 L817.7,726.7 L819.7,733.4 L821.3,740.6 L822.7,748.2 L823.8,756.1 L824.6,764.4 L825.3,773 L825.9,782 L826.2,792.3 L826.3,804 L826.2,816 L826.1,827.4 L825.9,837 L825.9,843.9 M545.8,853.9 L550.2,849.3 L556.3,843.1 L563.5,835.6 L571.2,827.4 L578.6,818.8 L585.1,810.2 L590.7,801.5 L596,792.3 L601.1,782.7 L606,772.9 L610.8,763.1 L615.7,753.5 L620.6,743.8 L625.7,734.1 L630.7,724.3 L635.4,714.6 L639.8,705.4 L643.6,696.7 L646.8,688.5 L649.6,680.8 L651.9,673.4 L654,666.3 L655.8,659.5 L657.6,653 L659.1,646.7 L660.2,640.6 L661.2,634.8 L662.1,629.3 L663.2,624.3 L664.6,619.8 L666.1,615.7 L667.7,611.7 L669.5,608.2 L671.5,605.4 L673.9,603.4 L676.8,602.3 L680.3,602.5 L684.2,603.7 L688.5,605.8 L693.1,608.4 L698,611.4 L703,614.6 L708.3,618 L713.8,621.9 L719.7,626.2 L725.7,630.7 L731.8,635.3 L738,639.9 L744.4,644.5 L751.1,649.1 L758,653.9 L764.8,658.7 L771.3,663.7 L777.3,668.7 L782.8,673.9 L788.1,679.2 L793.1,684.5 L797.8,690 L802.2,695.5 L806.1,701.1 L809.6,706.6 L812.7,712 L815.4,717.5 L817.8,723.3 L819.9,729.4 L821.8,736 L823.5,743.1 L824.8,750.6 L825.8,758.4 L826.7,766.6 L827.4,775.1 L827.9,784 L828.3,794.2 L828.4,805.7 L828.3,817.6 L828.1,828.8 L828,838.4 L827.9,845.2 M551.2,855.1 L555.6,850.5 L561.6,844.4 L568.8,837 L576.3,828.9 L583.7,820.4 L590.1,811.9 L595.6,803.3 L600.9,794.2 L605.9,784.7 L610.7,775 L615.5,765.3 L620.3,755.8 L625.2,746.3 L630.2,736.6 L635.1,727 L639.8,717.5 L644.1,708.3 L647.9,699.7 L651.1,691.7 L653.8,684 L656.1,676.7 L658.1,669.7 L660,663 L661.7,656.6 L663.2,650.3 L664.3,644.3 L665.3,638.6 L666.2,633.2 L667.2,628.2 L668.6,623.8 L670.2,619.7 L671.7,615.8 L673.5,612.4 L675.4,609.5 L677.8,607.5 L680.7,606.5 L684.1,606.7 L688,607.9 L692.2,609.9 L696.8,612.5 L701.6,615.5 L706.6,618.6 L711.8,622 L717.3,625.9 L723,630.1 L729,634.6 L735,639.1 L741.1,643.6 L747.4,648.1 L754.1,652.7 L760.9,657.4 L767.6,662.2 L774,667.1 L779.9,672.1 L785.4,677.2 L790.7,682.4 L795.6,687.7 L800.3,693.1 L804.5,698.5 L808.4,704 L811.9,709.5 L814.9,714.9 L817.6,720.3 L820,726 L822.1,732 L823.9,738.6 L825.6,745.6 L826.9,752.9 L827.9,760.7 L828.8,768.8 L829.4,777.2 L830,786 L830.3,796 L830.4,807.4 L830.4,819.2 L830.2,830.3 L830.1,839.7 L830,846.4 M556.7,856.2 L561,851.7 L567,845.6 L574,838.4 L581.5,830.3 L588.7,821.9 L595.1,813.6 L600.6,805.1 L605.7,796.1 L610.7,786.7 L615.5,777.1 L620.2,767.6 L624.9,758.2 L629.8,748.8 L634.7,739.2 L639.6,729.7 L644.2,720.3 L648.5,711.3 L652.2,702.8 L655.3,694.8 L658,687.2 L660.3,680 L662.3,673.1 L664.1,666.5 L665.8,660.1 L667.3,654 L668.4,648 L669.3,642.4 L670.2,637 L671.3,632.1 L672.6,627.8 L674.2,623.7 L675.7,619.9 L677.4,616.5 L679.4,613.7 L681.7,611.7 L684.6,610.7 L687.9,610.9 L691.8,612.1 L696,614.1 L700.5,616.6 L705.2,619.6 L710.1,622.6 L715.3,626 L720.7,629.8 L726.4,634 L732.3,638.4 L738.2,642.9 L744.2,647.4 L750.5,651.8 L757.1,656.4 L763.8,661 L770.4,665.7 L776.8,670.6 L782.6,675.5 L788,680.5 L793.2,685.7 L798.1,690.9 L802.7,696.2 L806.9,701.6 L810.7,707 L814.2,712.4 L817.2,717.7 L819.8,723.1 L822.1,728.7 L824.2,734.7 L826.1,741.1 L827.7,748.1 L829,755.3 L830,763 L830.9,771 L831.5,779.3 L832.1,788 L832.4,797.9 L832.5,809.2 L832.4,820.8 L832.3,831.8 L832.1,841.1 L832.1,847.7 M562.2,857.4 L566.4,852.9 L572.3,846.9 L579.3,839.8 L586.6,831.8 L593.8,823.5 L600,815.3 L605.5,806.9 L610.6,798 L615.5,788.7 L620.2,779.3 L624.9,769.8 L629.5,760.5 L634.3,751.3 L639.2,741.8 L644,732.4 L648.6,723.1 L652.8,714.2 L656.5,705.8 L659.6,698 L662.2,690.5 L664.5,683.3 L666.4,676.5 L668.2,670 L669.9,663.7 L671.4,657.6 L672.5,651.7 L673.4,646.1 L674.3,640.9 L675.3,636.1 L676.7,631.7 L678.2,627.7 L679.7,623.9 L681.4,620.6 L683.3,617.8 L685.7,615.9 L688.5,614.9 L691.8,615 L695.6,616.2 L699.7,618.2 L704.2,620.7 L708.9,623.6 L713.7,626.7 L718.8,630 L724.2,633.8 L729.8,637.9 L735.5,642.2 L741.4,646.7 L747.4,651.1 L753.6,655.5 L760.1,660 L766.7,664.6 L773.3,669.2 L779.5,674 L785.3,678.9 L790.7,683.8 L795.8,688.9 L800.6,694.1 L805.1,699.3 L809.3,704.7 L813.1,710 L816.4,715.4 L819.4,720.6 L822,725.9 L824.3,731.5 L826.4,737.3 L828.2,743.7 L829.8,750.6 L831.1,757.7 L832.1,765.3 L832.9,773.2 L833.6,781.4 L834.1,790 L834.5,799.8 L834.6,810.9 L834.5,822.4 L834.3,833.2 L834.2,842.4 L834.1,849 M567.6,858.5 L571.8,854.2 L577.6,848.2 L584.5,841.1 L591.8,833.3 L598.8,825.1 L605,817 L610.4,808.7 L615.4,799.9 L620.3,790.7 L624.9,781.4 L629.5,772.1 L634.1,762.9 L638.9,753.8 L643.7,744.4 L648.4,735.1 L653,726 L657.1,717.2 L660.7,708.9 L663.8,701.1 L666.4,693.7 L668.6,686.7 L670.6,679.9 L672.4,673.5 L674.1,667.3 L675.5,661.3 L676.6,655.5 L677.5,649.9 L678.4,644.7 L679.4,640 L680.7,635.7 L682.2,631.7 L683.7,628 L685.4,624.7 L687.3,622 L689.6,620 L692.3,619.1 L695.6,619.2 L699.4,620.4 L703.5,622.3 L707.9,624.9 L712.5,627.7 L717.3,630.7 L722.3,634 L727.6,637.7 L733.1,641.8 L738.8,646.1 L744.7,650.5 L750.5,654.8 L756.7,659.2 L763.1,663.6 L769.6,668.1 L776.1,672.7 L782.3,677.5 L788,682.3 L793.3,687.2 L798.3,692.2 L803.1,697.3 L807.6,702.5 L811.7,707.7 L815.4,713 L818.7,718.3 L821.7,723.5 L824.2,728.7 L826.5,734.2 L828.6,740 L830.4,746.3 L831.9,753 L833.2,760.1 L834.2,767.6 L835,775.4 L835.7,783.5 L836.2,792 L836.5,801.7 L836.6,812.6 L836.6,824 L836.4,834.7 L836.3,843.7 L836.2,850.2 M573.1,859.7 L577.2,855.4 L583,849.5 L589.8,842.5 L596.9,834.8 L603.9,826.7 L610,818.6 L615.3,810.5 L620.3,801.8 L625.1,792.7 L629.7,783.5 L634.2,774.3 L638.8,765.3 L643.4,756.2 L648.2,747 L652.9,737.8 L657.3,728.8 L661.4,720.1 L665,711.9 L668.1,704.2 L670.6,696.9 L672.8,690 L674.8,683.4 L676.5,677 L678.2,670.9 L679.6,664.9 L680.7,659.2 L681.6,653.7 L682.4,648.6 L683.4,643.9 L684.7,639.7 L686.2,635.7 L687.7,632.1 L689.4,628.8 L691.2,626.1 L693.5,624.2 L696.2,623.2 L699.5,623.4 L703.2,624.5 L707.2,626.5 L711.6,629 L716.1,631.8 L720.9,634.7 L725.8,638 L731,641.6 L736.5,645.7 L742.1,649.9 L747.9,654.2 L753.7,658.5 L759.7,662.8 L766.1,667.2 L772.5,671.7 L778.9,676.2 L785,680.9 L790.6,685.6 L795.9,690.5 L800.9,695.4 L805.6,700.5 L810,705.6 L814,710.8 L817.7,716 L821,721.2 L823.9,726.3 L826.5,731.5 L828.7,736.9 L830.7,742.6 L832.5,748.9 L834.1,755.5 L835.3,762.5 L836.3,769.9 L837.1,777.6 L837.7,785.6 L838.3,794 L838.6,803.5 L838.7,814.4 L838.6,825.6 L838.5,836.1 L838.3,845.1 L838.3,851.5 M578.5,860.8 L582.6,856.6 L588.3,850.8 L595,843.9 L602.1,836.2 L609,828.2 L615,820.3 L620.2,812.2 L625.2,803.7 L629.9,794.7 L634.4,785.6 L638.9,776.6 L643.4,767.6 L648,758.7 L652.7,749.6 L657.3,740.5 L661.7,731.6 L665.8,723 L669.3,715 L672.3,707.4 L674.8,700.2 L677,693.3 L678.9,686.8 L680.6,680.5 L682.3,674.4 L683.7,668.6 L684.7,662.9 L685.6,657.5 L686.5,652.5 L687.5,647.8 L688.8,643.6 L690.2,639.8 L691.7,636.1 L693.3,632.9 L695.2,630.2 L697.4,628.4 L700.1,627.4 L703.3,627.6 L707,628.7 L711,630.6 L715.2,633.1 L719.8,635.9 L724.4,638.8 L729.3,641.9 L734.5,645.6 L739.9,649.6 L745.4,653.7 L751.1,658 L756.9,662.3 L762.8,666.5 L769.1,670.8 L775.4,675.2 L781.7,679.7 L787.8,684.3 L793.3,689 L798.5,693.8 L803.4,698.7 L808.1,703.7 L812.4,708.7 L816.4,713.8 L820.1,719 L823.3,724.1 L826.2,729.2 L828.7,734.3 L830.9,739.6 L832.9,745.3 L834.7,751.4 L836.2,758 L837.4,764.9 L838.4,772.2 L839.2,779.8 L839.8,787.7 L840.3,796 L840.7,805.4 L840.8,816.1 L840.7,827.2 L840.5,837.6 L840.4,846.4 L840.3,852.7 M584,862 L588,857.8 L593.6,852.1 L600.2,845.2 L607.3,837.7 L614,829.8 L620,822 L625.2,814 L630,805.6 L634.6,796.8 L639.1,787.8 L643.6,778.8 L648,770 L652.6,761.2 L657.2,752.2 L661.8,743.2 L666.1,734.4 L670.1,726 L673.6,718 L676.5,710.5 L679.1,703.4 L681.2,696.6 L683.1,690.2 L684.8,684 L686.4,678 L687.8,672.2 L688.8,666.6 L689.7,661.3 L690.5,656.3 L691.5,651.7 L692.8,647.6 L694.2,643.8 L695.7,640.2 L697.3,637 L699.1,634.4 L701.3,632.5 L704,631.6 L707.2,631.8 L710.8,632.9 L714.7,634.8 L718.9,637.2 L723.4,639.9 L728,642.8 L732.8,645.9 L737.9,649.5 L743.2,653.5 L748.7,657.6 L754.3,661.8 L760,666 L765.9,670.2 L772.1,674.4 L778.4,678.8 L784.6,683.2 L790.5,687.8 L796,692.4 L801.1,697.1 L806,701.9 L810.5,706.9 L814.8,711.8 L818.8,716.9 L822.4,722 L825.6,727.1 L828.4,732 L830.9,737.1 L833.1,742.4 L835,747.9 L836.8,754 L838.3,760.5 L839.5,767.3 L840.5,774.5 L841.3,782 L841.9,789.8 L842.4,798 L842.7,807.3 L842.8,817.9 L842.8,828.8 L842.6,839 L842.5,847.8 L842.4,854 M589.5,863.2 L593.4,859 L599,853.4 L605.5,846.6 L612.4,839.2 L619.1,831.4 L625,823.7 L630.1,815.8 L634.9,807.5 L639.4,798.8 L643.9,789.9 L648.2,781.1 L652.6,772.4 L657.1,763.7 L661.7,754.8 L666.2,746 L670.5,737.3 L674.4,728.9 L677.9,721 L680.8,713.7 L683.3,706.7 L685.4,700 L687.2,693.6 L688.9,687.5 L690.5,681.6 L691.9,675.9 L692.9,670.3 L693.8,665.1 L694.6,660.2 L695.6,655.6 L696.8,651.6 L698.3,647.8 L699.7,644.3 L701.3,641.1 L703.1,638.5 L705.3,636.7 L707.9,635.8 L711,635.9 L714.6,637 L718.4,638.9 L722.6,641.3 L727,644 L731.6,646.8 L736.3,649.9 L741.4,653.5 L746.6,657.3 L752,661.4 L757.6,665.6 L763.1,669.7 L769,673.9 L775.1,678.1 L781.3,682.4 L787.4,686.7 L793.3,691.2 L798.7,695.8 L803.7,700.4 L808.5,705.2 L813,710 L817.3,715 L821.2,720 L824.7,725 L827.9,730 L830.7,734.9 L833.1,739.9 L835.3,745.1 L837.2,750.6 L838.9,756.6 L840.4,763 L841.6,769.7 L842.6,776.8 L843.4,784.2 L844,791.9 L844.5,800 L844.8,809.2 L844.9,819.6 L844.8,830.3 L844.7,840.5 L844.5,849.1 L844.5,855.3 M594.9,864.3 L598.8,860.2 L604.3,854.6 L610.7,848 L617.6,840.7 L624.2,833 L630,825.4 L635,817.6 L639.7,809.3 L644.2,800.8 L648.6,792 L652.9,783.3 L657.2,774.7 L661.7,766.2 L666.2,757.4 L670.6,748.7 L674.9,740.1 L678.8,731.9 L682.2,724.1 L685,716.8 L687.5,709.9 L689.6,703.3 L691.4,697 L693.1,691 L694.6,685.1 L696,679.5 L697,674.1 L697.8,668.9 L698.7,664 L699.6,659.6 L700.9,655.5 L702.3,651.8 L703.7,648.3 L705.2,645.2 L707,642.7 L709.2,640.9 L711.8,640 L714.9,640.1 L718.3,641.2 L722.2,643 L726.3,645.4 L730.6,648.1 L735.1,650.9 L739.8,653.9 L744.8,657.4 L750,661.2 L755.3,665.3 L760.8,669.4 L766.3,673.5 L772,677.5 L778,681.7 L784.2,685.9 L790.2,690.2 L796,694.7 L801.4,699.2 L806.3,703.8 L811,708.5 L815.5,713.2 L819.7,718.1 L823.6,723 L827.1,728 L830.2,732.9 L832.9,737.8 L835.3,742.7 L837.5,747.8 L839.4,753.2 L841.1,759.1 L842.6,765.5 L843.7,772.1 L844.7,779.1 L845.4,786.4 L846,794 L846.5,802 L846.9,811 L846.9,821.3 L846.9,831.9 L846.7,841.9 L846.6,850.5 L846.5,856.5 M600.4,865.5 L604.2,861.4 L609.6,855.9 L616,849.4 L622.7,842.1 L629.2,834.6 L635,827 L639.9,819.4 L644.6,811.2 L649,802.8 L653.3,794.2 L657.6,785.5 L661.9,777.1 L666.2,768.6 L670.7,760 L675.1,751.4 L679.3,742.9 L683.1,734.8 L686.5,727.1 L689.3,720 L691.7,713.1 L693.8,706.6 L695.6,700.4 L697.2,694.4 L698.7,688.7 L700.1,683.1 L701.1,677.8 L701.9,672.7 L702.7,667.9 L703.7,663.5 L704.9,659.5 L706.3,655.8 L707.7,652.4 L709.2,649.3 L711,646.8 L713.1,645 L715.7,644.1 L718.7,644.3 L722.1,645.4 L725.9,647.2 L730,649.5 L734.3,652.1 L738.7,654.9 L743.3,657.9 L748.2,661.4 L753.4,665.1 L758.6,669.1 L764,673.2 L769.5,677.2 L775.1,681.2 L781,685.3 L787.1,689.5 L793,693.7 L798.8,698.1 L804,702.5 L808.9,707.1 L813.6,711.7 L818,716.4 L822.1,721.2 L825.9,726.1 L829.4,731 L832.5,735.8 L835.2,740.6 L837.6,745.5 L839.7,750.5 L841.5,755.9 L843.2,761.7 L844.7,768 L845.8,774.5 L846.8,781.4 L847.5,788.6 L848.1,796.1 L848.6,804 L848.9,812.9 L849,823.1 L848.9,833.5 L848.8,843.4 L848.7,851.8 L848.6,857.8 M605.8,866.6 L609.6,862.6 L615,857.2 L621.2,850.7 L627.9,843.6 L634.3,836.1 L640,828.7 L644.8,821.2 L649.4,813.1 L653.8,804.8 L658.1,796.3 L662.3,787.8 L666.5,779.5 L670.8,771.1 L675.2,762.6 L679.5,754.1 L683.6,745.8 L687.4,737.7 L690.7,730.2 L693.5,723.1 L695.9,716.4 L697.9,710 L699.7,703.8 L701.3,697.9 L702.9,692.3 L704.2,686.8 L705.2,681.5 L706,676.5 L706.8,671.7 L707.7,667.4 L708.9,663.5 L710.3,659.9 L711.7,656.5 L713.2,653.4 L714.9,651 L717,649.2 L719.5,648.3 L722.5,648.5 L725.9,649.5 L729.7,651.3 L733.7,653.6 L737.9,656.2 L742.3,658.9 L746.9,661.9 L751.7,665.3 L756.7,669 L761.9,672.9 L767.2,676.9 L772.6,680.9 L778.2,684.9 L784,688.9 L790,693 L795.9,697.2 L801.5,701.5 L806.7,705.9 L811.5,710.4 L816.1,715 L820.5,719.6 L824.6,724.3 L828.3,729.1 L831.7,734 L834.8,738.8 L837.4,743.5 L839.8,748.3 L841.9,753.3 L843.7,758.6 L845.4,764.3 L846.8,770.4 L848,776.9 L848.9,783.7 L849.6,790.8 L850.2,798.2 L850.7,806 L851,814.8 L851.1,824.8 L851,835.1 L850.9,844.9 L850.7,853.1 L850.7,859 M611.3,867.8 L615,863.8 L620.3,858.5 L626.5,852.1 L633,845.1 L639.4,837.7 L644.9,830.4 L649.8,823 L654.3,815 L658.6,806.8 L662.8,798.4 L667,790 L671.1,781.8 L675.4,773.6 L679.7,765.2 L683.9,756.8 L688,748.6 L691.8,740.7 L695,733.2 L697.8,726.2 L700.1,719.6 L702.1,713.3 L703.9,707.2 L705.5,701.4 L707,695.9 L708.3,690.4 L709.3,685.2 L710.1,680.2 L710.9,675.6 L711.8,671.3 L713,667.4 L714.3,663.9 L715.7,660.5 L717.2,657.5 L718.9,655.1 L720.9,653.4 L723.4,652.5 L726.4,652.6 L729.7,653.7 L733.4,655.4 L737.4,657.7 L741.5,660.3 L745.9,663 L750.4,665.9 L755.1,669.2 L760.1,672.9 L765.2,676.8 L770.5,680.7 L775.8,684.6 L781.2,688.5 L787,692.5 L792.9,696.6 L798.7,700.8 L804.3,705 L809.4,709.3 L814.1,713.7 L818.7,718.2 L823,722.8 L827,727.5 L830.7,732.2 L834.1,737 L837,741.7 L839.7,746.3 L842,751.1 L844,756 L845.9,761.2 L847.5,766.9 L848.9,772.9 L850.1,779.3 L851,786 L851.7,793 L852.3,800.3 L852.7,808 L853,816.7 L853.1,826.5 L853.1,836.7 L852.9,846.3 L852.8,854.5 L852.7,860.3 M616.8,868.9 L620.5,865 L625.6,859.8 L631.7,853.5 L638.2,846.5 L644.4,839.3 L649.9,832.1 L654.7,824.7 L659.2,816.9 L663.4,808.8 L667.6,800.6 L671.6,792.3 L675.7,784.2 L679.9,776.1 L684.2,767.8 L688.4,759.5 L692.4,751.4 L696.1,743.6 L699.3,736.3 L702,729.4 L704.3,722.8 L706.3,716.6 L708,710.6 L709.6,704.9 L711.1,699.4 L712.4,694.1 L713.3,688.9 L714.1,684 L714.9,679.4 L715.8,675.2 L717,671.4 L718.3,667.9 L719.7,664.6 L721.1,661.6 L722.8,659.2 L724.9,657.5 L727.3,656.7 L730.2,656.8 L733.5,657.8 L737.2,659.6 L741.1,661.8 L745.2,664.3 L749.4,667 L753.9,669.9 L758.6,673.2 L763.5,676.8 L768.5,680.6 L773.7,684.5 L778.9,688.4 L784.3,692.2 L790,696.1 L795.8,700.2 L801.5,704.3 L807,708.4 L812.1,712.7 L816.8,717 L821.2,721.5 L825.5,726 L829.4,730.6 L833.1,735.2 L836.4,740 L839.3,744.6 L841.9,749.2 L844.2,753.9 L846.2,758.7 L848,763.9 L849.7,769.4 L851,775.4 L852.2,781.7 L853.1,788.3 L853.8,795.2 L854.3,802.4 L854.8,810 L855.1,818.5 L855.2,828.3 L855.1,838.3 L855,847.8 L854.9,855.8 L854.8,861.6 M622.2,870.1 L625.9,866.3 L631,861.1 L637,854.9 L643.3,848 L649.5,840.9 L654.9,833.8 L659.6,826.5 L664,818.8 L668.2,810.8 L672.3,802.7 L676.3,794.5 L680.3,786.5 L684.5,778.5 L688.7,770.4 L692.8,762.2 L696.8,754.2 L700.4,746.6 L703.6,739.3 L706.3,732.5 L708.5,726.1 L710.5,719.9 L712.2,714 L713.7,708.4 L715.2,703 L716.5,697.7 L717.4,692.7 L718.2,687.8 L719,683.3 L719.9,679.1 L721,675.4 L722.3,671.9 L723.7,668.7 L725.1,665.8 L726.8,663.4 L728.8,661.7 L731.2,660.9 L734.1,661 L737.3,662 L740.9,663.7 L744.8,665.9 L748.8,668.4 L753,671 L757.4,673.9 L762,677.1 L766.8,680.7 L771.8,684.5 L776.9,688.3 L782,692.1 L787.4,695.9 L793,699.8 L798.7,703.7 L804.4,707.8 L809.8,711.9 L814.7,716.1 L819.4,720.4 L823.8,724.7 L828,729.2 L831.9,733.7 L835.5,738.3 L838.7,742.9 L841.6,747.5 L844.2,752.1 L846.4,756.7 L848.4,761.4 L850.2,766.5 L851.8,772 L853.2,777.9 L854.3,784.1 L855.2,790.6 L855.9,797.4 L856.4,804.5 L856.9,812 L857.2,820.4 L857.3,830 L857.2,839.9 L857.1,849.2 L856.9,857.2 L856.9,862.8 M627.7,871.2 L631.3,867.5 L636.3,862.4 L642.2,856.2 L648.5,849.5 L654.6,842.4 L659.9,835.4 L664.5,828.3 L668.9,820.7 L673,812.8 L677,804.8 L681,796.8 L685,788.9 L689,781 L693.2,773 L697.3,765 L701.2,757.1 L704.7,749.5 L707.9,742.4 L710.5,735.7 L712.8,729.3 L714.7,723.3 L716.4,717.5 L717.9,711.9 L719.3,706.6 L720.6,701.4 L721.5,696.4 L722.3,691.6 L723,687.1 L723.9,683 L725.1,679.4 L726.3,675.9 L727.7,672.7 L729.1,669.9 L730.7,667.5 L732.7,665.9 L735.1,665 L737.9,665.2 L741.1,666.2 L744.7,667.9 L748.4,670 L752.4,672.5 L756.6,675.1 L760.9,677.9 L765.4,681.1 L770.2,684.6 L775.1,688.3 L780.1,692.1 L785.2,695.8 L790.5,699.6 L796,703.4 L801.6,707.3 L807.2,711.3 L812.5,715.3 L817.4,719.4 L822,723.7 L826.3,728 L830.4,732.4 L834.3,736.8 L837.8,741.4 L841,745.9 L843.9,750.5 L846.4,754.9 L848.7,759.5 L850.6,764.2 L852.4,769.2 L853.9,774.6 L855.3,780.4 L856.4,786.5 L857.2,792.9 L857.9,799.6 L858.5,806.7 L858.9,814 L859.2,822.3 L859.3,831.7 L859.3,841.5 L859.1,850.7 L859,858.5 L858.9,864.1 M633.1,872.4 L636.7,868.7 L641.6,863.6 L647.5,857.6 L653.7,851 L659.6,844 L664.9,837.1 L669.4,830.1 L673.7,822.6 L677.8,814.9 L681.8,806.9 L685.7,799 L689.6,791.3 L693.6,783.5 L697.7,775.6 L701.7,767.7 L705.5,759.9 L709.1,752.4 L712.2,745.4 L714.8,738.8 L717,732.5 L718.9,726.6 L720.5,720.9 L722,715.4 L723.4,710.1 L724.7,705 L725.6,700.1 L726.4,695.4 L727.1,691 L728,687 L729.1,683.3 L730.4,680 L731.6,676.8 L733.1,674 L734.7,671.7 L736.6,670 L739,669.2 L741.8,669.3 L744.9,670.3 L748.4,672 L752.1,674.1 L756.1,676.6 L760.1,679.1 L764.4,681.9 L768.9,685 L773.6,688.5 L778.4,692.1 L783.4,695.9 L788.4,699.5 L793.5,703.2 L799,707 L804.5,710.8 L810,714.8 L815.3,718.8 L820.1,722.8 L824.6,727 L828.9,731.2 L832.9,735.6 L836.7,740 L840.2,744.4 L843.4,748.9 L846.2,753.4 L848.7,757.8 L850.9,762.2 L852.8,766.9 L854.5,771.8 L856.1,777.2 L857.4,782.9 L858.5,788.9 L859.3,795.2 L860,801.8 L860.6,808.8 L861,816 L861.3,824.1 L861.4,833.5 L861.3,843.1 L861.2,852.1 L861.1,859.8 L861,865.3 M638.6,873.5 L642.1,869.9 L647,864.9 L652.7,859 L658.8,852.4 L664.7,845.6 L669.9,838.8 L674.4,831.9 L678.6,824.5 L682.6,816.9 L686.5,809.1 L690.3,801.3 L694.2,793.6 L698.2,786 L702.2,778.2 L706.1,770.4 L709.9,762.7 L713.4,755.4 L716.4,748.5 L719,742 L721.2,735.8 L723,729.9 L724.7,724.3 L726.2,718.9 L727.6,713.7 L728.8,708.7 L729.7,703.8 L730.4,699.2 L731.2,694.9 L732,690.9 L733.1,687.3 L734.4,684 L735.6,680.9 L737,678.1 L738.6,675.8 L740.5,674.2 L742.8,673.4 L745.6,673.5 L748.7,674.5 L752.1,676.1 L755.8,678.2 L759.7,680.6 L763.7,683.1 L767.9,685.8 L772.3,689 L776.9,692.4 L781.7,696 L786.6,699.6 L791.5,703.3 L796.6,706.9 L802,710.6 L807.4,714.4 L812.8,718.3 L818,722.2 L822.8,726.2 L827.2,730.3 L831.4,734.5 L835.4,738.8 L839.1,743.1 L842.6,747.5 L845.7,751.9 L848.5,756.3 L850.9,760.7 L853.1,765 L855,769.6 L856.7,774.5 L858.2,779.7 L859.5,785.4 L860.6,791.3 L861.4,797.5 L862.1,804 L862.6,810.9 L863.1,818 L863.4,826 L863.4,835.2 L863.4,844.7 L863.3,853.6 L863.1,861.2 L863.1,866.6 M644.1,874.7 L647.5,871.1 L652.3,866.2 L658,860.4 L664,853.9 L669.8,847.2 L674.9,840.5 L679.3,833.7 L683.4,826.4 L687.4,818.9 L691.2,811.2 L695,803.5 L698.8,796 L702.7,788.5 L706.7,780.8 L710.6,773.1 L714.3,765.6 L717.7,758.3 L720.7,751.5 L723.2,745.1 L725.4,739 L727.2,733.2 L728.8,727.7 L730.3,722.4 L731.7,717.3 L732.9,712.3 L733.8,707.5 L734.5,703 L735.2,698.7 L736.1,694.8 L737.2,691.3 L738.4,688 L739.6,684.9 L741,682.2 L742.6,680 L744.5,678.4 L746.7,677.6 L749.4,677.7 L752.5,678.7 L755.9,680.3 L759.5,682.3 L763.3,684.7 L767.3,687.2 L771.4,689.8 L775.8,692.9 L780.3,696.3 L785,699.8 L789.8,703.4 L794.6,707 L799.7,710.6 L805,714.2 L810.4,718 L815.7,721.8 L820.8,725.6 L825.5,729.6 L829.8,733.6 L834,737.8 L837.9,742 L841.6,746.2 L845,750.5 L848,754.9 L850.8,759.2 L853.2,763.5 L855.3,767.8 L857.2,772.3 L858.9,777.1 L860.4,782.3 L861.7,787.9 L862.7,793.7 L863.5,799.8 L864.2,806.3 L864.7,813 L865.2,819.9 L865.4,827.9 L865.5,836.9 L865.5,846.3 L865.3,855.1 L865.2,862.5 L865.2,867.9 M649.5,875.9 L652.9,872.3 L657.6,867.5 L663.2,861.7 L669.1,855.4 L674.8,848.8 L679.9,842.2 L684.2,835.4 L688.3,828.3 L692.2,820.9 L696,813.3 L699.7,805.8 L703.4,798.4 L707.3,790.9 L711.2,783.4 L715,775.8 L718.7,768.4 L722.1,761.3 L725,754.5 L727.5,748.2 L729.6,742.3 L731.4,736.6 L733,731.1 L734.4,725.9 L735.8,720.8 L737,716 L737.8,711.3 L738.6,706.8 L739.3,702.6 L740.1,698.7 L741.2,695.2 L742.4,692 L743.6,689 L745,686.3 L746.5,684.1 L748.4,682.5 L750.6,681.7 L753.3,681.9 L756.3,682.8 L759.6,684.4 L763.2,686.4 L767,688.8 L770.8,691.2 L774.9,693.8 L779.2,696.9 L783.7,700.2 L788.3,703.6 L793,707.2 L797.8,710.7 L802.8,714.2 L808,717.8 L813.3,721.5 L818.5,725.3 L823.5,729.1 L828.1,733 L832.4,736.9 L836.5,741 L840.4,745.1 L844,749.3 L847.3,753.6 L850.4,757.9 L853.1,762.2 L855.4,766.4 L857.5,770.6 L859.4,775.1 L861,779.8 L862.5,784.9 L863.8,790.3 L864.8,796.1 L865.6,802.1 L866.3,808.5 L866.8,815.1 L867.2,821.9 L867.5,829.8 L867.6,838.7 L867.5,847.8 L867.4,856.5 L867.3,863.9 L867.2,869.1 M655,877 L658.3,873.5 L663,868.8 L668.5,863.1 L674.3,856.9 L679.9,850.3 L684.8,843.8 L689.1,837.2 L693.1,830.2 L697,822.9 L700.7,815.5 L704.4,808 L708.1,800.7 L711.8,793.4 L715.7,786 L719.5,778.5 L723.1,771.2 L726.4,764.2 L729.3,757.6 L731.7,751.4 L733.8,745.5 L735.6,739.9 L737.2,734.5 L738.6,729.4 L739.9,724.4 L741.1,719.6 L741.9,715 L742.6,710.6 L743.3,706.4 L744.2,702.6 L745.2,699.2 L746.4,696 L747.6,693.1 L748.9,690.4 L750.5,688.2 L752.3,686.7 L754.5,685.9 L757.1,686.1 L760.1,687 L763.4,688.5 L766.9,690.5 L770.6,692.8 L774.4,695.2 L778.4,697.8 L782.6,700.8 L787.1,704 L791.6,707.5 L796.3,711 L801,714.5 L805.8,717.9 L811,721.5 L816.2,725.1 L821.3,728.8 L826.3,732.5 L830.8,736.4 L835,740.3 L839.1,744.3 L842.9,748.3 L846.4,752.5 L849.7,756.7 L852.7,760.9 L855.4,765.1 L857.7,769.2 L859.8,773.4 L861.6,777.8 L863.2,782.4 L864.6,787.4 L865.9,792.8 L866.9,798.5 L867.7,804.4 L868.4,810.7 L868.9,817.2 L869.3,823.9 L869.6,831.6 L869.6,840.4 L869.6,849.4 L869.5,858 L869.3,865.2 L869.3,870.4 M660.4,878.2 L663.7,874.7 L668.3,870.1 L673.7,864.5 L679.4,858.3 L685,851.9 L689.8,845.5 L694,839 L698,832.1 L701.8,824.9 L705.4,817.6 L709.1,810.3 L712.7,803.1 L716.4,795.9 L720.2,788.6 L723.9,781.2 L727.5,774.1 L730.7,767.1 L733.6,760.6 L736,754.5 L738,748.7 L739.8,743.2 L741.3,737.9 L742.7,732.9 L744,728 L745.2,723.3 L746,718.7 L746.7,714.3 L747.4,710.3 L748.2,706.5 L749.2,703.2 L750.4,700.1 L751.6,697.1 L752.9,694.5 L754.4,692.4 L756.2,690.9 L758.4,690.1 L761,690.2 L763.9,691.1 L767.1,692.7 L770.6,694.7 L774.2,696.9 L778,699.2 L781.9,701.8 L786.1,704.7 L790.4,707.9 L794.9,711.3 L799.5,714.8 L804.1,718.2 L808.9,721.6 L813.9,725.1 L819.1,728.6 L824.1,732.3 L829,736 L833.5,739.7 L837.6,743.6 L841.6,747.5 L845.4,751.5 L848.9,755.6 L852.1,759.7 L855,763.9 L857.6,768 L859.9,772.1 L862,776.2 L863.8,780.5 L865.4,785.1 L866.8,790 L868,795.3 L869,800.9 L869.8,806.7 L870.4,812.9 L870.9,819.3 L871.4,825.9 L871.6,833.5 L871.7,842.1 L871.6,851 L871.5,859.4 L871.4,866.6 L871.4,871.6 M665.9,879.3 L669.1,875.9 L673.6,871.4 L679,865.9 L684.6,859.8 L690,853.5 L694.8,847.2 L699,840.8 L702.9,834 L706.6,826.9 L710.2,819.7 L713.7,812.5 L717.3,805.4 L721,798.4 L724.7,791.2 L728.3,784 L731.8,776.9 L735.1,770.1 L737.9,763.7 L740.2,757.7 L742.2,752 L744,746.5 L745.5,741.3 L746.8,736.3 L748.1,731.5 L749.2,726.9 L750.1,722.4 L750.8,718.1 L751.5,714.1 L752.3,710.4 L753.3,707.1 L754.4,704.1 L755.6,701.2 L756.9,698.6 L758.4,696.5 L760.1,695 L762.3,694.3 L764.8,694.4 L767.7,695.3 L770.9,696.8 L774.3,698.8 L777.8,701 L781.5,703.3 L785.4,705.8 L789.5,708.7 L793.8,711.8 L798.2,715.2 L802.7,718.5 L807.2,721.9 L812,725.3 L816.9,728.7 L822,732.2 L827,735.8 L831.8,739.4 L836.2,743.1 L840.3,746.9 L844.2,750.8 L847.8,754.7 L851.3,758.7 L854.5,762.8 L857.4,766.9 L859.9,770.9 L862.2,775 L864.2,779 L866,783.2 L867.5,787.7 L868.9,792.6 L870.1,797.8 L871.1,803.3 L871.9,809.1 L872.5,815.1 L873,821.4 L873.4,827.9 L873.7,835.4 L873.8,843.9 L873.7,852.6 L873.6,860.9 L873.5,867.9 L873.4,872.9 M671.4,880.5 L674.5,877.2 L679,872.6 L684.2,867.2 L689.7,861.3 L695.1,855.1 L699.8,848.9 L703.9,842.6 L707.7,835.9 L711.4,828.9 L714.9,821.8 L718.4,814.8 L721.9,807.8 L725.5,800.8 L729.2,793.8 L732.8,786.7 L736.2,779.7 L739.4,773 L742.1,766.7 L744.5,760.8 L746.5,755.2 L748.1,749.9 L749.6,744.7 L751,739.8 L752.3,735.1 L753.3,730.5 L754.2,726.1 L754.9,721.9 L755.5,718 L756.3,714.4 L757.3,711.1 L758.5,708.1 L759.6,705.3 L760.9,702.7 L762.3,700.7 L764.1,699.2 L766.2,698.5 L768.7,698.6 L771.5,699.5 L774.6,701 L778,702.9 L781.5,705 L785.1,707.3 L788.9,709.8 L793,712.6 L797.2,715.7 L801.5,719 L805.9,722.3 L810.4,725.6 L815,728.9 L819.9,732.3 L824.9,735.8 L829.8,739.3 L834.5,742.8 L838.8,746.5 L842.9,750.2 L846.7,754 L850.3,757.9 L853.7,761.9 L856.9,765.8 L859.7,769.9 L862.2,773.9 L864.4,777.8 L866.4,781.8 L868.1,786 L869.7,790.4 L871.1,795.2 L872.3,800.3 L873.2,805.7 L874,811.4 L874.6,817.3 L875.1,823.5 L875.5,829.9 L875.8,837.3 L875.8,845.6 L875.8,854.2 L875.7,862.3 L875.5,869.2 L875.5,874.2 M676.8,881.6 L679.9,878.4 L684.3,873.9 L689.4,868.6 L694.9,862.8 L700.2,856.6 L704.8,850.6 L708.8,844.4 L712.6,837.8 L716.2,830.9 L719.7,824 L723.1,817 L726.5,810.2 L730.1,803.3 L733.7,796.4 L737.2,789.4 L740.6,782.5 L743.7,776 L746.4,769.8 L748.7,764 L750.7,758.4 L752.3,753.2 L753.8,748.2 L755.1,743.3 L756.4,738.7 L757.4,734.2 L758.3,729.9 L758.9,725.7 L759.6,721.8 L760.4,718.3 L761.3,715.1 L762.5,712.1 L763.6,709.3 L764.8,706.8 L766.3,704.8 L768,703.4 L770,702.6 L772.5,702.8 L775.3,703.6 L778.4,705.1 L781.6,707 L785.1,709.1 L788.7,711.3 L792.4,713.8 L796.4,716.6 L800.5,719.6 L804.8,722.8 L809.2,726.1 L813.5,729.4 L818.1,732.6 L822.9,735.9 L827.8,739.3 L832.6,742.8 L837.3,746.3 L841.5,749.9 L845.5,753.5 L849.3,757.3 L852.8,761.1 L856.2,765 L859.2,768.9 L862,772.9 L864.5,776.8 L866.7,780.7 L868.6,784.6 L870.3,788.7 L871.9,793 L873.2,797.7 L874.4,802.8 L875.3,808.1 L876.1,813.7 L876.7,819.5 L877.2,825.6 L877.6,831.9 L877.8,839.1 L877.9,847.3 L877.8,855.8 L877.7,863.8 L877.6,870.6 L877.6,875.4 M682.3,882.8 L685.3,879.6 L689.6,875.2 L694.7,870 L700,864.2 L705.2,858.2 L709.8,852.2 L713.7,846.2 L717.4,839.7 L721,833 L724.4,826.1 L727.8,819.3 L731.2,812.5 L734.6,805.8 L738.2,798.9 L741.7,792.1 L745,785.4 L748,778.9 L750.7,772.8 L753,767.1 L754.9,761.7 L756.5,756.5 L758,751.6 L759.3,746.8 L760.5,742.3 L761.5,737.8 L762.3,733.6 L763,729.5 L763.7,725.7 L764.4,722.2 L765.4,719 L766.5,716.1 L767.6,713.4 L768.8,710.9 L770.2,708.9 L771.9,707.5 L773.9,706.8 L776.3,706.9 L779.1,707.8 L782.1,709.2 L785.3,711.1 L788.7,713.2 L792.3,715.4 L795.9,717.8 L799.8,720.5 L803.9,723.5 L808.1,726.7 L812.4,729.9 L816.7,733.1 L821.2,736.3 L825.9,739.5 L830.7,742.9 L835.5,746.3 L840,749.7 L844.2,753.3 L848.1,756.9 L851.8,760.5 L855.3,764.3 L858.6,768.1 L861.6,772 L864.4,775.9 L866.8,779.7 L869,783.5 L870.8,787.4 L872.5,791.4 L874,795.7 L875.4,800.3 L876.5,805.3 L877.4,810.5 L878.2,816 L878.8,821.7 L879.2,827.7 L879.6,833.9 L879.9,841 L879.9,849.1 L879.9,857.4 L879.8,865.3 L879.7,871.9 L879.6,876.7 M687.7,883.9 L690.7,880.8 L695,876.5 L699.9,871.4 L705.2,865.7 L710.3,859.8 L714.8,853.9 L718.6,847.9 L722.3,841.6 L725.8,835 L729.1,828.2 L732.5,821.5 L735.8,814.9 L739.2,808.3 L742.7,801.5 L746.1,794.8 L749.4,788.2 L752.4,781.8 L755,775.9 L757.2,770.2 L759.1,764.9 L760.7,759.8 L762.1,755 L763.4,750.3 L764.6,745.8 L765.6,741.5 L766.4,737.3 L767.1,733.3 L767.7,729.5 L768.5,726.1 L769.4,723 L770.5,720.1 L771.6,717.5 L772.8,715.1 L774.2,713.1 L775.8,711.7 L777.8,711 L780.2,711.1 L782.9,712 L785.8,713.4 L789,715.2 L792.4,717.2 L795.8,719.4 L799.5,721.8 L803.3,724.5 L807.3,727.4 L811.4,730.5 L815.6,733.7 L819.9,736.8 L824.3,740 L828.9,743.2 L833.6,746.4 L838.3,749.8 L842.8,753.2 L846.9,756.6 L850.7,760.2 L854.3,763.8 L857.8,767.5 L861,771.2 L864,775 L866.7,778.9 L869.1,782.7 L871.2,786.4 L873.1,790.2 L874.7,794.1 L876.2,798.3 L877.5,802.9 L878.6,807.8 L879.5,812.9 L880.3,818.3 L880.9,823.9 L881.3,829.8 L881.7,835.9 L881.9,842.9 L882,850.8 L882,859 L881.9,866.7 L881.8,873.3 L881.7,877.9 M693.2,885.1 L696.2,882 L700.3,877.8 L705.2,872.7 L710.4,867.2 L715.4,861.4 L719.8,855.6 L723.6,849.7 L727.1,843.5 L730.6,837 L733.9,830.4 L737.1,823.7 L740.4,817.2 L743.8,810.8 L747.2,804.1 L750.5,797.5 L753.8,791 L756.7,784.8 L759.3,778.9 L761.5,773.4 L763.3,768.1 L764.9,763.2 L766.3,758.4 L767.5,753.8 L768.7,749.4 L769.7,745.1 L770.5,741 L771.2,737.1 L771.8,733.4 L772.5,730 L773.4,727 L774.5,724.2 L775.6,721.5 L776.8,719.2 L778.1,717.2 L779.7,715.9 L781.7,715.2 L784,715.3 L786.7,716.1 L789.6,717.5 L792.7,719.3 L796,721.3 L799.4,723.4 L803,725.8 L806.7,728.4 L810.6,731.3 L814.7,734.3 L818.8,737.5 L823,740.5 L827.3,743.6 L831.9,746.8 L836.5,750 L841.1,753.3 L845.5,756.6 L849.5,760 L853.3,763.5 L856.9,767.1 L860.3,770.7 L863.4,774.4 L866.4,778.1 L869,781.9 L871.4,785.6 L873.5,789.3 L875.3,793 L876.9,796.9 L878.3,801 L879.6,805.5 L880.8,810.2 L881.7,815.3 L882.4,820.6 L882.9,826.1 L883.4,831.9 L883.8,837.9 L884,844.7 L884.1,852.5 L884,860.6 L883.9,868.2 L883.8,874.6 L883.8,879.2 M698.7,886.3 L701.6,883.2 L705.6,879.1 L710.4,874.1 L715.5,868.7 L720.4,862.9 L724.7,857.3 L728.5,851.5 L732,845.4 L735.3,839 L738.6,832.5 L741.8,826 L745,819.6 L748.3,813.2 L751.7,806.7 L755,800.2 L758.1,793.9 L761,787.7 L763.6,781.9 L765.7,776.5 L767.5,771.4 L769.1,766.5 L770.4,761.8 L771.7,757.3 L772.8,753 L773.8,748.8 L774.6,744.7 L775.2,740.9 L775.8,737.3 L776.6,733.9 L777.5,730.9 L778.5,728.2 L779.6,725.6 L780.7,723.3 L782.1,721.4 L783.7,720 L785.6,719.4 L787.9,719.5 L790.5,720.3 L793.3,721.6 L796.4,723.4 L799.6,725.4 L803,727.5 L806.5,729.7 L810.2,732.3 L814,735.2 L818,738.2 L822.1,741.2 L826.2,744.3 L830.4,747.3 L834.9,750.4 L839.4,753.5 L843.9,756.8 L848.3,760.1 L852.2,763.4 L855.9,766.8 L859.4,770.3 L862.8,773.9 L865.9,777.5 L868.7,781.1 L871.4,784.8 L873.7,788.5 L875.7,792.1 L877.5,795.8 L879.1,799.6 L880.5,803.6 L881.8,808 L882.9,812.7 L883.8,817.7 L884.5,822.9 L885,828.3 L885.5,834 L885.8,839.9 L886.1,846.6 L886.1,854.3 L886.1,862.2 L886,869.6 L885.9,875.9 L885.8,880.5 M704.1,887.4 L707,884.4 L711,880.4 L715.7,875.5 L720.7,870.1 L725.5,864.5 L729.7,859 L733.4,853.3 L736.8,847.3 L740.1,841 L743.3,834.6 L746.5,828.2 L749.6,822 L752.9,815.7 L756.2,809.3 L759.4,802.9 L762.5,796.7 L765.4,790.7 L767.8,785 L769.9,779.7 L771.7,774.6 L773.3,769.8 L774.6,765.2 L775.8,760.8 L777,756.5 L777.9,752.4 L778.7,748.4 L779.3,744.7 L779.9,741.1 L780.6,737.8 L781.5,734.9 L782.5,732.2 L783.6,729.6 L784.7,727.4 L786,725.5 L787.6,724.2 L789.5,723.5 L791.7,723.6 L794.3,724.4 L797.1,725.8 L800.1,727.5 L803.3,729.5 L806.5,731.5 L810,733.7 L813.6,736.3 L817.4,739.1 L821.3,742 L825.3,745 L829.3,748 L833.5,751 L837.9,754 L842.4,757.1 L846.8,760.3 L851,763.5 L854.9,766.8 L858.5,770.1 L862,773.6 L865.3,777.1 L868.3,780.6 L871.1,784.2 L873.7,787.8 L876,791.4 L878,795 L879.7,798.6 L881.3,802.3 L882.7,806.3 L883.9,810.6 L885,815.2 L885.9,820.1 L886.6,825.2 L887.1,830.5 L887.5,836.1 L887.9,841.9 L888.1,848.5 L888.2,856 L888.2,863.8 L888.1,871.1 L888,877.3 L887.9,881.7 M709.6,888.6 L712.4,885.6 L716.3,881.6 L720.9,876.9 L725.8,871.6 L730.6,866.1 L734.7,860.6 L738.3,855.1 L741.7,849.2 L744.9,843 L748.1,836.7 L751.2,830.5 L754.3,824.3 L757.4,818.2 L760.7,811.9 L763.9,805.7 L766.9,799.5 L769.7,793.6 L772.1,788 L774.2,782.8 L775.9,777.9 L777.4,773.1 L778.8,768.6 L779.9,764.3 L781.1,760.1 L782,756.1 L782.8,752.2 L783.4,748.5 L784,745 L784.6,741.8 L785.5,738.9 L786.5,736.2 L787.6,733.7 L788.7,731.5 L790,729.7 L791.5,728.4 L793.4,727.7 L795.6,727.8 L798.1,728.6 L800.8,729.9 L803.8,731.6 L806.9,733.5 L810.1,735.5 L813.5,737.7 L817,740.2 L820.8,743 L824.6,745.9 L828.5,748.8 L832.5,751.7 L836.6,754.6 L840.9,757.6 L845.3,760.7 L849.6,763.8 L853.7,766.9 L857.6,770.2 L861.1,773.5 L864.5,776.8 L867.7,780.3 L870.7,783.7 L873.5,787.3 L876,790.8 L878.2,794.4 L880.2,797.8 L881.9,801.4 L883.5,805 L884.8,808.9 L886.1,813.2 L887.1,817.7 L888,822.5 L888.6,827.5 L889.2,832.7 L889.6,838.2 L890,843.9 L890.2,850.4 L890.3,857.7 L890.2,865.4 L890.1,872.5 L890,878.6 L890,883 M715,889.7 L717.8,886.8 L721.6,882.9 L726.2,878.2 L731,873.1 L735.6,867.7 L739.7,862.3 L743.2,856.9 L746.6,851.1 L749.7,845 L752.8,838.9 L755.8,832.7 L758.9,826.7 L762,820.7 L765.2,814.5 L768.3,808.4 L771.3,802.3 L774,796.5 L776.4,791.1 L778.4,786 L780.2,781.1 L781.6,776.5 L782.9,772 L784.1,767.8 L785.2,763.7 L786.1,759.7 L786.8,755.9 L787.4,752.2 L788,748.8 L788.7,745.7 L789.6,742.9 L790.6,740.2 L791.6,737.8 L792.7,735.6 L793.9,733.8 L795.4,732.5 L797.2,731.9 L799.4,732 L801.9,732.8 L804.6,734.1 L807.5,735.7 L810.5,737.6 L813.7,739.6 L817,741.7 L820.5,744.2 L824.1,746.9 L827.9,749.7 L831.7,752.6 L835.6,755.5 L839.6,758.3 L843.9,761.2 L848.2,764.2 L852.4,767.3 L856.5,770.4 L860.3,773.5 L863.7,776.8 L867.1,780.1 L870.2,783.4 L873.2,786.9 L875.9,790.3 L878.3,793.8 L880.5,797.3 L882.5,800.7 L884.2,804.2 L885.7,807.8 L887,811.6 L888.2,815.7 L889.2,820.2 L890.1,824.9 L890.7,829.8 L891.3,834.9 L891.7,840.3 L892,845.9 L892.3,852.2 L892.3,859.5 L892.3,866.9 L892.2,874 L892.1,880 L892,884.2 M720.5,890.9 L723.2,888 L727,884.2 L731.4,879.6 L736.1,874.6 L740.7,869.3 L744.7,864 L748.2,858.6 L751.4,853 L754.5,847 L757.5,841 L760.5,835 L763.5,829.1 L766.6,823.1 L769.7,817.1 L772.7,811.1 L775.7,805.2 L778.3,799.5 L780.7,794.1 L782.7,789.1 L784.4,784.3 L785.8,779.8 L787.1,775.4 L788.2,771.3 L789.3,767.2 L790.2,763.4 L790.9,759.6 L791.5,756 L792.1,752.7 L792.7,749.6 L793.6,746.8 L794.6,744.3 L795.6,741.8 L796.6,739.7 L797.9,737.9 L799.3,736.7 L801.1,736.1 L803.3,736.2 L805.7,736.9 L808.3,738.2 L811.2,739.8 L814.2,741.7 L817.2,743.6 L820.5,745.7 L823.9,748.1 L827.5,750.8 L831.2,753.5 L834.9,756.4 L838.8,759.2 L842.7,762 L846.9,764.9 L851.1,767.8 L855.3,770.8 L859.2,773.8 L862.9,776.9 L866.4,780.1 L869.6,783.3 L872.7,786.6 L875.6,790 L878.3,793.4 L880.7,796.8 L882.8,800.2 L884.7,803.6 L886.4,807 L887.9,810.5 L889.2,814.2 L890.4,818.3 L891.4,822.7 L892.2,827.3 L892.8,832.1 L893.4,837.1 L893.8,842.4 L894.1,847.9 L894.3,854.1 L894.4,861.2 L894.3,868.5 L894.3,875.4 L894.2,881.3 L894.1,885.5 M726,892 L728.6,889.3 L732.3,885.5 L736.7,881 L741.3,876 L745.8,870.8 L749.7,865.7 L753.1,860.4 L756.3,854.8 L759.3,849 L762.3,843.1 L765.2,837.2 L768.1,831.4 L771.1,825.6 L774.2,819.7 L777.2,813.8 L780,808 L782.7,802.4 L785,797.2 L786.9,792.2 L788.6,787.6 L790,783.1 L791.2,778.8 L792.4,774.8 L793.4,770.8 L794.3,767 L795,763.3 L795.6,759.8 L796.1,756.5 L796.8,753.5 L797.6,750.8 L798.6,748.3 L799.5,745.9 L800.6,743.8 L801.8,742.1 L803.3,740.9 L805,740.3 L807.1,740.4 L809.5,741.1 L812.1,742.3 L814.8,743.9 L817.8,745.7 L820.8,747.6 L824,749.7 L827.4,752.1 L830.9,754.6 L834.5,757.4 L838.2,760.2 L841.9,762.9 L845.8,765.7 L849.8,768.5 L854,771.3 L858.1,774.3 L862,777.3 L865.6,780.3 L869,783.4 L872.2,786.6 L875.2,789.8 L878,793.1 L880.6,796.4 L883,799.8 L885.1,803.1 L887,806.4 L888.6,809.8 L890.1,813.2 L891.3,816.9 L892.5,820.9 L893.5,825.2 L894.3,829.7 L894.9,834.4 L895.4,839.3 L895.8,844.5 L896.2,849.9 L896.4,856 L896.5,862.9 L896.4,870.1 L896.3,876.9 L896.2,882.7 L896.2,886.8 M731.4,893.2 L734,890.5 L737.6,886.8 L741.9,882.4 L746.4,877.5 L750.8,872.4 L754.7,867.4 L758,862.2 L761.1,856.7 L764.1,851.1 L767,845.3 L769.9,839.5 L772.7,833.8 L775.7,828.1 L778.7,822.3 L781.6,816.5 L784.4,810.8 L787,805.4 L789.3,800.2 L791.2,795.4 L792.8,790.8 L794.2,786.4 L795.4,782.3 L796.5,778.2 L797.5,774.4 L798.4,770.7 L799.1,767 L799.7,763.6 L800.2,760.4 L800.8,757.4 L801.7,754.8 L802.6,752.3 L803.5,750 L804.6,747.9 L805.8,746.2 L807.2,745 L808.9,744.4 L810.9,744.5 L813.3,745.3 L815.8,746.5 L818.5,748 L821.4,749.8 L824.4,751.7 L827.5,753.7 L830.8,756 L834.2,758.5 L837.8,761.2 L841.4,763.9 L845,766.6 L848.8,769.3 L852.8,772.1 L856.9,774.9 L860.9,777.8 L864.7,780.7 L868.3,783.7 L871.6,786.7 L874.7,789.8 L877.7,793 L880.5,796.2 L883,799.5 L885.3,802.8 L887.4,806.1 L889.2,809.3 L890.8,812.5 L892.2,815.9 L893.5,819.5 L894.6,823.5 L895.6,827.7 L896.4,832.1 L897,836.7 L897.5,841.5 L897.9,846.6 L898.2,851.9 L898.5,857.9 L898.5,864.7 L898.5,871.7 L898.4,878.4 L898.3,884 L898.2,888 M736.9,894.3 L739.4,891.7 L743,888.1 L747.2,883.7 L751.6,879 L755.9,874 L759.6,869 L762.9,864 L766,858.6 L768.9,853.1 L771.8,847.4 L774.6,841.7 L777.4,836.1 L780.2,830.6 L783.2,824.9 L786.1,819.2 L788.8,813.7 L791.3,808.3 L793.6,803.3 L795.4,798.5 L797,794 L798.4,789.8 L799.5,785.7 L800.6,781.7 L801.6,778 L802.5,774.3 L803.2,770.8 L803.7,767.4 L804.3,764.2 L804.9,761.3 L805.7,758.7 L806.6,756.3 L807.5,754 L808.5,752 L809.7,750.4 L811.1,749.2 L812.8,748.6 L814.8,748.7 L817.1,749.4 L819.5,750.6 L822.2,752.1 L825,753.9 L828,755.7 L831,757.7 L834.2,760 L837.6,762.4 L841.1,765 L844.6,767.7 L848.2,770.4 L851.9,773 L855.8,775.7 L859.8,778.5 L863.7,781.3 L867.5,784.1 L871,787.1 L874.2,790.1 L877.3,793.1 L880.2,796.2 L882.9,799.4 L885.4,802.6 L887.7,805.8 L889.7,809 L891.5,812.1 L893,815.3 L894.4,818.7 L895.7,822.2 L896.8,826 L897.7,830.1 L898.5,834.5 L899.1,839 L899.6,843.7 L900,848.7 L900.3,853.9 L900.5,859.7 L900.6,866.4 L900.5,873.3 L900.4,879.8 L900.4,885.3 L900.3,889.3 M742.3,895.5 L744.8,892.9 L748.3,889.3 L752.4,885.1 L756.7,880.4 L760.9,875.6 L764.6,870.7 L767.8,865.8 L770.8,860.5 L773.7,855.1 L776.5,849.5 L779.2,844 L782,838.5 L784.8,833.1 L787.7,827.5 L790.5,821.9 L793.2,816.5 L795.7,811.2 L797.8,806.3 L799.7,801.7 L801.2,797.3 L802.5,793.1 L803.7,789.1 L804.8,785.2 L805.8,781.5 L806.6,777.9 L807.3,774.5 L807.8,771.2 L808.3,768.1 L808.9,765.3 L809.7,762.7 L810.6,760.3 L811.5,758.1 L812.5,756.1 L813.7,754.5 L815,753.4 L816.7,752.8 L818.6,752.9 L820.8,753.6 L823.3,754.7 L825.9,756.2 L828.7,757.9 L831.5,759.7 L834.5,761.7 L837.7,763.9 L841,766.3 L844.4,768.9 L847.8,771.5 L851.4,774.1 L855,776.7 L858.8,779.3 L862.7,782 L866.6,784.8 L870.2,787.6 L873.6,790.4 L876.8,793.4 L879.8,796.4 L882.7,799.4 L885.3,802.5 L887.8,805.6 L890,808.8 L892,811.9 L893.7,815 L895.3,818.1 L896.6,821.4 L897.8,824.9 L898.9,828.6 L899.9,832.6 L900.6,836.9 L901.2,841.3 L901.7,845.9 L902.1,850.8 L902.4,855.9 L902.6,861.6 L902.6,868.2 L902.6,874.9 L902.5,881.3 L902.4,886.7 L902.4,890.5 M747.8,896.6 L750.2,894.1 L753.6,890.6 L757.7,886.5 L761.9,881.9 L766,877.1 L769.6,872.4 L772.8,867.6 L775.7,862.4 L778.5,857.1 L781.2,851.7 L783.9,846.2 L786.6,840.9 L789.4,835.5 L792.2,830.1 L794.9,824.7 L797.6,819.3 L800,814.2 L802.1,809.4 L803.9,804.8 L805.4,800.5 L806.7,796.4 L807.9,792.5 L808.9,788.7 L809.9,785.1 L810.7,781.6 L811.4,778.2 L811.9,775 L812.4,772 L813,769.2 L813.8,766.7 L814.6,764.4 L815.5,762.2 L816.5,760.2 L817.6,758.7 L818.9,757.5 L820.5,757 L822.5,757.1 L824.6,757.7 L827,758.9 L829.6,760.3 L832.3,762 L835.1,763.8 L838,765.7 L841.1,767.8 L844.3,770.2 L847.7,772.7 L851.1,775.3 L854.5,777.8 L858.1,780.4 L861.8,782.9 L865.6,785.6 L869.4,788.3 L873,791 L876.3,793.8 L879.4,796.7 L882.4,799.6 L885.1,802.6 L887.7,805.6 L890.2,808.7 L892.3,811.8 L894.3,814.8 L896,817.9 L897.5,820.9 L898.8,824.1 L900,827.5 L901.1,831.2 L902,835.1 L902.7,839.3 L903.3,843.6 L903.8,848.1 L904.1,852.9 L904.5,857.9 L904.7,863.5 L904.7,869.9 L904.7,876.5 L904.6,882.7 L904.5,888 L904.5,891.8 M753.3,897.8 L755.6,895.3 L759,891.9 L762.9,887.9 L767.1,883.4 L771.1,878.7 L774.6,874.1 L777.7,869.4 L780.6,864.3 L783.3,859.1 L786,853.8 L788.6,848.5 L791.2,843.2 L793.9,838 L796.7,832.7 L799.4,827.4 L802,822.1 L804.3,817.1 L806.4,812.4 L808.2,808 L809.6,803.7 L810.9,799.7 L812,795.9 L813,792.2 L814,788.7 L814.8,785.2 L815.4,781.9 L816,778.8 L816.5,775.8 L817,773.1 L817.8,770.6 L818.6,768.4 L819.5,766.2 L820.5,764.4 L821.6,762.8 L822.9,761.7 L824.4,761.1 L826.3,761.2 L828.4,761.9 L830.8,763 L833.3,764.5 L835.9,766.1 L838.7,767.8 L841.5,769.7 L844.6,771.8 L847.7,774.1 L851,776.6 L854.3,779.1 L857.7,781.6 L861.1,784 L864.8,786.6 L868.5,789.1 L872.2,791.8 L875.7,794.5 L879,797.2 L882,800 L884.9,802.9 L887.6,805.8 L890.2,808.7 L892.5,811.7 L894.7,814.8 L896.6,817.8 L898.2,820.7 L899.7,823.7 L901,826.8 L902.2,830.2 L903.2,833.7 L904.1,837.6 L904.8,841.7 L905.4,845.9 L905.9,850.4 L906.2,855 L906.5,859.8 L906.7,865.4 L906.8,871.6 L906.7,878.1 L906.6,884.2 L906.6,889.4 L906.5,893.1 M758.7,899 L761,896.5 L764.3,893.2 L768.1,889.2 L772.2,884.9 L776.1,880.3 L779.6,875.8 L782.6,871.1 L785.4,866.2 L788.1,861.1 L790.7,855.9 L793.3,850.7 L795.8,845.6 L798.5,840.5 L801.2,835.3 L803.8,830.1 L806.3,825 L808.7,820.1 L810.7,815.4 L812.4,811.1 L813.9,807 L815.1,803.1 L816.2,799.3 L817.2,795.7 L818.1,792.2 L818.9,788.9 L819.5,785.6 L820,782.6 L820.5,779.7 L821.1,777 L821.8,774.6 L822.7,772.4 L823.5,770.3 L824.4,768.5 L825.5,766.9 L826.8,765.9 L828.3,765.3 L830.2,765.4 L832.2,766.1 L834.5,767.2 L837,768.6 L839.6,770.2 L842.2,771.8 L845,773.6 L848,775.7 L851.1,778 L854.3,780.4 L857.5,782.8 L860.8,785.3 L864.2,787.7 L867.8,790.2 L871.4,792.7 L875,795.3 L878.5,797.9 L881.7,800.6 L884.6,803.3 L887.5,806.1 L890.1,809 L892.6,811.9 L894.9,814.8 L897,817.8 L898.8,820.7 L900.5,823.6 L901.9,826.5 L903.2,829.6 L904.3,832.8 L905.3,836.3 L906.2,840.1 L906.9,844.1 L907.5,848.2 L907.9,852.6 L908.3,857.1 L908.6,861.8 L908.8,867.2 L908.8,873.4 L908.8,879.7 L908.7,885.6 L908.6,890.7 L908.6,894.3 M764.2,900.1 L766.5,897.7 L769.6,894.5 L773.4,890.6 L777.4,886.3 L781.2,881.9 L784.6,877.4 L787.5,872.9 L790.3,868.1 L792.9,863.1 L795.4,858 L797.9,853 L800.5,848 L803,843 L805.7,837.9 L808.3,832.8 L810.7,827.8 L813,823 L815,818.5 L816.6,814.2 L818.1,810.2 L819.3,806.4 L820.3,802.7 L821.3,799.2 L822.2,795.8 L823,792.5 L823.6,789.4 L824.1,786.3 L824.6,783.5 L825.1,780.9 L825.9,778.6 L826.7,776.4 L827.5,774.4 L828.4,772.6 L829.5,771.1 L830.7,770 L832.2,769.5 L834,769.6 L836,770.2 L838.3,771.3 L840.7,772.7 L843.2,774.2 L845.8,775.9 L848.5,777.6 L851.4,779.7 L854.5,781.9 L857.6,784.2 L860.7,786.6 L864,789 L867.3,791.4 L870.8,793.8 L874.4,796.3 L877.9,798.8 L881.2,801.4 L884.4,804 L887.2,806.6 L890,809.4 L892.6,812.2 L895,815 L897.3,817.9 L899.3,820.8 L901.1,823.6 L902.7,826.4 L904.1,829.3 L905.4,832.3 L906.5,835.5 L907.5,838.9 L908.3,842.6 L909,846.5 L909.6,850.5 L910,854.8 L910.4,859.2 L910.7,863.8 L910.8,869.1 L910.9,875.1 L910.9,881.3 L910.8,887.1 L910.7,892 L910.7,895.6 M769.6,901.3 L771.9,898.9 L775,895.8 L778.6,892 L782.5,887.8 L786.3,883.5 L789.6,879.1 L792.4,874.7 L795.1,870 L797.7,865.1 L800.2,860.2 L802.6,855.2 L805.1,850.3 L807.6,845.4 L810.2,840.5 L812.7,835.5 L815.1,830.6 L817.3,825.9 L819.3,821.5 L820.9,817.4 L822.3,813.5 L823.5,809.7 L824.5,806.1 L825.4,802.7 L826.3,799.4 L827.1,796.2 L827.7,793.1 L828.2,790.1 L828.6,787.4 L829.2,784.8 L829.9,782.5 L830.7,780.4 L831.5,778.4 L832.4,776.7 L833.4,775.2 L834.6,774.2 L836.1,773.7 L837.8,773.8 L839.8,774.4 L842,775.4 L844.4,776.8 L846.8,778.3 L849.4,779.9 L852.1,781.6 L854.9,783.6 L857.8,785.8 L860.9,788.1 L864,790.4 L867.1,792.7 L870.4,795 L873.8,797.4 L877.3,799.8 L880.7,802.3 L884,804.8 L887,807.4 L889.9,810 L892.5,812.6 L895.1,815.4 L897.5,818.1 L899.7,820.9 L901.7,823.7 L903.4,826.5 L905,829.3 L906.4,832.1 L907.6,835 L908.7,838.1 L909.6,841.5 L910.5,845.1 L911.1,848.8 L911.7,852.8 L912.1,857 L912.4,861.3 L912.7,865.8 L912.9,871 L913,876.8 L912.9,882.9 L912.8,888.6 L912.8,893.4 L912.7,896.8 M775.1,902.4 L777.3,900.1 L780.3,897.1 L783.9,893.4 L787.7,889.3 L791.3,885 L794.6,880.8 L797.4,876.5 L800,871.9 L802.5,867.1 L804.9,862.3 L807.3,857.4 L809.7,852.7 L812.2,847.9 L814.7,843.1 L817.1,838.2 L819.5,833.5 L821.6,828.9 L823.5,824.6 L825.1,820.5 L826.5,816.7 L827.6,813 L828.7,809.5 L829.6,806.2 L830.5,803 L831.2,799.8 L831.8,796.8 L832.2,793.9 L832.7,791.2 L833.2,788.7 L833.9,786.5 L834.7,784.5 L835.5,782.5 L836.4,780.8 L837.3,779.4 L838.5,778.4 L840,777.9 L841.7,777.9 L843.6,778.6 L845.8,779.6 L848,780.9 L850.5,782.4 L853,783.9 L855.6,785.6 L858.3,787.6 L861.2,789.7 L864.2,791.9 L867.2,794.2 L870.2,796.5 L873.4,798.7 L876.8,801 L880.2,803.4 L883.5,805.8 L886.7,808.2 L889.7,810.7 L892.5,813.3 L895.1,815.9 L897.6,818.5 L899.9,821.2 L902,824 L904,826.7 L905.7,829.5 L907.2,832.2 L908.6,834.9 L909.8,837.7 L910.8,840.8 L911.8,844 L912.6,847.6 L913.2,851.2 L913.8,855.1 L914.2,859.2 L914.5,863.4 L914.8,867.8 L915,872.8 L915,878.6 L915,884.4 L914.9,890 L914.8,894.7 L914.8,898.1 M780.6,903.6 L782.7,901.4 L785.6,898.3 L789.1,894.7 L792.8,890.8 L796.4,886.6 L799.6,882.5 L802.3,878.3 L804.8,873.8 L807.3,869.2 L809.6,864.4 L812,859.7 L814.3,855 L816.7,850.4 L819.2,845.7 L821.6,840.9 L823.9,836.3 L826,831.8 L827.8,827.6 L829.4,823.7 L830.7,819.9 L831.8,816.4 L832.8,812.9 L833.7,809.7 L834.6,806.5 L835.3,803.5 L835.9,800.5 L836.3,797.7 L836.8,795.1 L837.3,792.7 L838,790.5 L838.7,788.5 L839.5,786.6 L840.3,784.9 L841.3,783.5 L842.5,782.5 L843.9,782 L845.5,782.1 L847.4,782.7 L849.5,783.7 L851.7,785 L854.1,786.4 L856.5,788 L859.1,789.6 L861.8,791.5 L864.6,793.6 L867.5,795.8 L870.4,798 L873.4,800.2 L876.5,802.4 L879.8,804.6 L883.1,806.9 L886.4,809.3 L889.5,811.7 L892.4,814.1 L895.1,816.6 L897.6,819.1 L900.1,821.7 L902.3,824.4 L904.4,827 L906.3,829.7 L908,832.4 L909.5,835 L910.8,837.7 L912,840.5 L913,843.4 L913.9,846.6 L914.7,850 L915.3,853.6 L915.9,857.4 L916.3,861.4 L916.6,865.5 L916.9,869.8 L917,874.7 L917.1,880.3 L917.1,886 L917,891.5 L916.9,896.1 L916.9,899.4 M786,904.7 L788.1,902.6 L791,899.6 L794.4,896.1 L798,892.2 L801.5,888.2 L804.5,884.2 L807.2,880.1 L809.7,875.7 L812.1,871.2 L814.4,866.6 L816.7,861.9 L818.9,857.4 L821.3,852.9 L823.7,848.3 L826,843.7 L828.3,839.1 L830.3,834.8 L832.1,830.7 L833.6,826.8 L834.9,823.2 L836,819.7 L837,816.4 L837.9,813.2 L838.7,810.1 L839.4,807.1 L839.9,804.2 L840.4,801.5 L840.8,798.9 L841.3,796.6 L842,794.5 L842.7,792.5 L843.5,790.6 L844.3,789 L845.2,787.7 L846.4,786.7 L847.7,786.2 L849.4,786.3 L851.2,786.9 L853.2,787.8 L855.4,789.1 L857.7,790.5 L860.1,792 L862.6,793.6 L865.2,795.4 L867.9,797.5 L870.8,799.6 L873.6,801.8 L876.5,803.9 L879.6,806.1 L882.8,808.3 L886,810.5 L889.2,812.8 L892.2,815.1 L895.1,817.5 L897.7,819.9 L900.2,822.4 L902.6,824.9 L904.8,827.5 L906.8,830.1 L908.6,832.7 L910.3,835.3 L911.7,837.9 L913,840.5 L914.1,843.2 L915.2,846.1 L916.1,849.2 L916.8,852.5 L917.5,856 L918,859.7 L918.4,863.6 L918.7,867.6 L918.9,871.8 L919.1,876.6 L919.1,882 L919.1,887.6 L919,892.9 L919,897.4 L918.9,900.6 M791.5,905.9 L793.5,903.8 L796.3,900.9 L799.6,897.5 L803.1,893.7 L806.5,889.8 L809.5,885.8 L812.1,881.8 L814.5,877.6 L816.9,873.2 L819.1,868.7 L821.3,864.2 L823.6,859.8 L825.8,855.4 L828.2,850.9 L830.5,846.4 L832.6,842 L834.6,837.7 L836.4,833.7 L837.9,830 L839.1,826.4 L840.2,823 L841.1,819.8 L842,816.7 L842.8,813.7 L843.5,810.8 L844,808 L844.5,805.3 L844.9,802.8 L845.4,800.5 L846,798.4 L846.7,796.5 L847.5,794.7 L848.3,793.1 L849.2,791.8 L850.3,790.9 L851.6,790.4 L853.2,790.5 L855,791 L857,792 L859.1,793.2 L861.3,794.6 L863.7,796 L866.1,797.6 L868.6,799.4 L871.3,801.4 L874.1,803.4 L876.9,805.5 L879.7,807.6 L882.6,809.7 L885.7,811.9 L888.9,814.1 L892,816.3 L895,818.6 L897.7,820.9 L900.3,823.2 L902.7,825.7 L905,828.1 L907.2,830.6 L909.2,833.2 L911,835.7 L912.6,838.2 L914,840.7 L915.2,843.3 L916.3,845.9 L917.3,848.7 L918.2,851.8 L919,855 L919.6,858.4 L920.1,862 L920.4,865.8 L920.7,869.7 L921,873.8 L921.2,878.5 L921.2,883.8 L921.2,889.2 L921.1,894.4 L921,898.8 L921,901.9 M796.9,907 L798.9,905 L801.6,902.2 L804.9,898.9 L808.3,895.2 L811.6,891.3 L814.5,887.5 L817,883.6 L819.4,879.5 L821.7,875.2 L823.9,870.8 L826,866.4 L828.2,862.1 L830.4,857.8 L832.7,853.5 L834.9,849.1 L837,844.8 L839,840.6 L840.7,836.8 L842.1,833.1 L843.3,829.6 L844.4,826.3 L845.3,823.2 L846.1,820.1 L846.9,817.2 L847.6,814.4 L848.1,811.7 L848.5,809.1 L848.9,806.6 L849.4,804.4 L850,802.4 L850.8,800.5 L851.5,798.8 L852.2,797.2 L853.1,795.9 L854.2,795 L855.5,794.6 L857.1,794.7 L858.8,795.2 L860.7,796.1 L862.8,797.3 L865,798.6 L867.2,800 L869.6,801.6 L872.1,803.3 L874.7,805.2 L877.4,807.3 L880.1,809.3 L882.9,811.4 L885.7,813.4 L888.7,815.5 L891.8,817.6 L894.8,819.8 L897.7,822 L900.4,824.3 L902.9,826.6 L905.3,828.9 L907.5,831.3 L909.6,833.7 L911.6,836.2 L913.3,838.7 L914.9,841.2 L916.2,843.6 L917.5,846.1 L918.5,848.6 L919.5,851.4 L920.3,854.3 L921.1,857.5 L921.7,860.8 L922.1,864.3 L922.5,868 L922.8,871.8 L923.1,875.8 L923.2,880.3 L923.3,885.5 L923.2,890.8 L923.2,895.8 L923.1,900.1 L923.1,903.1 M802.4,908.2 L804.3,906.2 L807,903.5 L810.1,900.2 L813.4,896.7 L816.7,892.9 L819.5,889.2 L821.9,885.4 L824.3,881.4 L826.5,877.2 L828.6,872.9 L830.7,868.7 L832.8,864.5 L835,860.3 L837.2,856.1 L839.3,851.8 L841.4,847.6 L843.3,843.6 L845,839.8 L846.4,836.3 L847.5,832.9 L848.6,829.7 L849.5,826.6 L850.3,823.6 L851,820.8 L851.7,818.1 L852.2,815.4 L852.6,812.9 L853,810.5 L853.5,808.3 L854.1,806.4 L854.8,804.5 L855.5,802.8 L856.2,801.3 L857.1,800.1 L858.1,799.2 L859.4,798.8 L860.9,798.8 L862.6,799.4 L864.5,800.3 L866.5,801.4 L868.6,802.7 L870.8,804.1 L873.1,805.6 L875.5,807.3 L878,809.1 L880.7,811.1 L883.3,813.1 L886,815.1 L888.8,817.1 L891.7,819.1 L894.7,821.2 L897.7,823.3 L900.5,825.4 L903.1,827.6 L905.5,829.9 L907.8,832.2 L910,834.5 L912.1,836.9 L913.9,839.3 L915.6,841.7 L917.2,844.1 L918.5,846.5 L919.7,848.9 L920.7,851.4 L921.6,854 L922.5,856.9 L923.2,860 L923.8,863.2 L924.2,866.6 L924.6,870.2 L924.9,873.9 L925.1,877.8 L925.3,882.2 L925.3,887.2 L925.3,892.4 L925.2,897.3 L925.2,901.4 L925.1,904.4 M807.9,909.4 L809.7,907.4 L812.3,904.8 L815.4,901.6 L818.6,898.1 L821.7,894.5 L824.5,890.9 L826.9,887.2 L829.1,883.3 L831.3,879.2 L833.3,875.1 L835.4,870.9 L837.4,866.9 L839.5,862.8 L841.7,858.7 L843.8,854.5 L845.8,850.4 L847.6,846.5 L849.2,842.8 L850.6,839.4 L851.8,836.1 L852.8,833 L853.6,830 L854.4,827.1 L855.2,824.4 L855.8,821.7 L856.3,819.1 L856.7,816.7 L857.1,814.4 L857.5,812.2 L858.1,810.3 L858.8,808.6 L859.5,806.9 L860.2,805.4 L861,804.2 L862.1,803.4 L863.3,802.9 L864.7,803 L866.4,803.5 L868.2,804.4 L870.2,805.5 L872.2,806.8 L874.4,808.1 L876.6,809.6 L879,811.2 L881.4,813 L883.9,814.9 L886.5,816.9 L889.1,818.8 L891.9,820.8 L894.7,822.7 L897.6,824.7 L900.5,826.8 L903.2,828.9 L905.8,831 L908.1,833.2 L910.4,835.4 L912.5,837.7 L914.5,840 L916.3,842.3 L918,844.7 L919.4,847 L920.7,849.3 L921.9,851.7 L922.9,854.1 L923.8,856.7 L924.6,859.5 L925.3,862.5 L925.9,865.6 L926.3,868.9 L926.7,872.4 L927,876 L927.2,879.8 L927.4,884.1 L927.4,889 L927.4,894 L927.3,898.7 L927.2,902.8 L927.2,905.7 M813.3,910.5 L815.1,908.6 L817.6,906.1 L820.6,903 L823.8,899.6 L826.8,896.1 L829.5,892.6 L831.8,889 L834,885.2 L836,881.2 L838.1,877.2 L840,873.2 L842,869.2 L844.1,865.3 L846.2,861.2 L848.2,857.2 L850.2,853.3 L852,849.5 L853.5,845.9 L854.9,842.5 L856,839.3 L856.9,836.3 L857.8,833.4 L858.5,830.6 L859.3,827.9 L859.9,825.3 L860.4,822.8 L860.8,820.4 L861.1,818.2 L861.6,816.1 L862.1,814.3 L862.8,812.6 L863.4,811 L864.2,809.5 L865,808.4 L866,807.5 L867.2,807.1 L868.6,807.2 L870.2,807.7 L872,808.5 L873.9,809.6 L875.9,810.9 L877.9,812.1 L880.1,813.6 L882.4,815.2 L884.8,816.9 L887.2,818.8 L889.8,820.7 L892.3,822.6 L894.9,824.4 L897.7,826.3 L900.5,828.3 L903.3,830.3 L906,832.3 L908.5,834.4 L910.7,836.5 L912.9,838.7 L915,840.9 L916.9,843.1 L918.7,845.4 L920.3,847.7 L921.7,850 L923,852.2 L924.1,854.5 L925.1,856.8 L926,859.3 L926.8,862 L927.4,865 L928,868 L928.4,871.2 L928.8,874.6 L929,878.1 L929.3,881.8 L929.4,886 L929.5,890.7 L929.4,895.6 L929.4,900.2 L929.3,904.1 L929.3,906.9 M818.8,911.7 L820.5,909.8 L823,907.3 L825.9,904.4 L828.9,901.1 L831.9,897.6 L834.5,894.2 L836.7,890.8 L838.8,887.1 L840.8,883.2 L842.8,879.3 L844.7,875.4 L846.7,871.6 L848.6,867.8 L850.7,863.8 L852.6,859.9 L854.5,856.1 L856.3,852.4 L857.8,848.9 L859.1,845.7 L860.2,842.6 L861.1,839.6 L861.9,836.8 L862.7,834.1 L863.4,831.5 L864,829 L864.4,826.6 L864.8,824.2 L865.2,822.1 L865.6,820.1 L866.2,818.3 L866.8,816.6 L867.4,815 L868.1,813.6 L868.9,812.5 L869.9,811.7 L871.1,811.3 L872.4,811.4 L874,811.9 L875.7,812.7 L877.6,813.7 L879.5,814.9 L881.5,816.2 L883.6,817.5 L885.8,819.1 L888.2,820.8 L890.5,822.6 L893,824.5 L895.5,826.3 L898,828.1 L900.7,830 L903.4,831.9 L906.2,833.8 L908.7,835.8 L911.1,837.8 L913.4,839.8 L915.5,841.9 L917.5,844.1 L919.3,846.3 L921.1,848.5 L922.6,850.7 L924,852.9 L925.3,855.1 L926.3,857.3 L927.3,859.5 L928.1,862 L928.9,864.6 L929.6,867.4 L930.1,870.4 L930.5,873.5 L930.9,876.8 L931.1,880.2 L931.3,883.8 L931.5,887.8 L931.5,892.4 L931.5,897.2 L931.4,901.7 L931.4,905.5 L931.3,908.2 M824.2,912.8 L825.9,911 L828.3,908.6 L831.1,905.7 L834.1,902.6 L836.9,899.2 L839.5,895.9 L841.6,892.6 L843.7,889 L845.6,885.3 L847.5,881.5 L849.4,877.7 L851.3,874 L853.2,870.2 L855.2,866.4 L857.1,862.6 L858.9,858.9 L860.6,855.3 L862.1,852 L863.3,848.8 L864.4,845.8 L865.3,843 L866.1,840.2 L866.8,837.6 L867.5,835.1 L868.1,832.6 L868.5,830.3 L868.9,828 L869.3,825.9 L869.7,824 L870.2,822.2 L870.8,820.6 L871.4,819.1 L872.1,817.8 L872.9,816.7 L873.8,815.9 L874.9,815.5 L876.3,815.5 L877.8,816 L879.5,816.8 L881.2,817.8 L883.1,819 L885.1,820.2 L887.1,821.5 L889.3,823 L891.5,824.7 L893.8,826.5 L896.2,828.2 L898.6,830 L901.1,831.8 L903.7,833.6 L906.4,835.4 L909,837.3 L911.5,839.2 L913.8,841.2 L916,843.2 L918,845.2 L920,847.3 L921.8,849.4 L923.4,851.5 L925,853.7 L926.3,855.8 L927.5,857.9 L928.6,860 L929.5,862.3 L930.3,864.6 L931,867.2 L931.7,869.9 L932.2,872.8 L932.6,875.9 L932.9,879 L933.2,882.3 L933.4,885.8 L933.6,889.7 L933.6,894.2 L933.6,898.8 L933.5,903.1 L933.4,906.8 L933.4,909.4 M829.7,914 L831.3,912.3 L833.6,909.9 L836.4,907.1 L839.2,904 L842,900.8 L844.4,897.6 L846.5,894.3 L848.5,890.9 L850.4,887.3 L852.3,883.6 L854.1,879.9 L855.9,876.3 L857.8,872.7 L859.7,869 L861.5,865.4 L863.3,861.8 L864.9,858.3 L866.4,855 L867.6,852 L868.6,849.1 L869.5,846.3 L870.3,843.6 L871,841.1 L871.6,838.6 L872.2,836.3 L872.6,834 L873,831.8 L873.3,829.8 L873.7,827.9 L874.2,826.2 L874.8,824.6 L875.4,823.2 L876.1,821.9 L876.8,820.8 L877.7,820 L878.8,819.7 L880.1,819.7 L881.6,820.2 L883.2,820.9 L884.9,821.9 L886.8,823.1 L888.6,824.2 L890.6,825.5 L892.7,827 L894.9,828.6 L897.1,830.3 L899.4,832 L901.8,833.7 L904.2,835.4 L906.7,837.2 L909.3,839 L911.8,840.8 L914.2,842.7 L916.5,844.5 L918.6,846.5 L920.6,848.5 L922.4,850.5 L924.2,852.5 L925.8,854.6 L927.3,856.7 L928.6,858.7 L929.8,860.8 L930.8,862.8 L931.7,865 L932.5,867.3 L933.2,869.8 L933.8,872.4 L934.3,875.2 L934.7,878.2 L935,881.2 L935.3,884.4 L935.5,887.8 L935.6,891.6 L935.7,895.9 L935.6,900.4 L935.6,904.6 L935.5,908.1 L935.5,910.7 M835.2,915.1 L836.7,913.5 L839,911.2 L841.6,908.5 L844.4,905.5 L847.1,902.4 L849.4,899.3 L851.5,896.1 L853.4,892.8 L855.2,889.3 L857,885.7 L858.8,882.2 L860.5,878.7 L862.3,875.2 L864.2,871.6 L866,868.1 L867.7,864.6 L869.3,861.2 L870.7,858.1 L871.8,855.1 L872.8,852.3 L873.7,849.6 L874.4,847 L875.1,844.6 L875.7,842.2 L876.3,839.9 L876.7,837.7 L877,835.6 L877.4,833.6 L877.8,831.8 L878.3,830.2 L878.8,828.7 L879.4,827.2 L880.1,826 L880.8,824.9 L881.7,824.2 L882.7,823.8 L884,823.9 L885.4,824.3 L886.9,825.1 L888.6,826 L890.4,827.1 L892.2,828.3 L894.1,829.5 L896.2,830.9 L898.3,832.5 L900.4,834.1 L902.7,835.8 L904.9,837.5 L907.2,839.1 L909.7,840.8 L912.2,842.5 L914.6,844.3 L917,846.1 L919.2,847.9 L921.2,849.8 L923.1,851.7 L924.9,853.7 L926.6,855.6 L928.2,857.6 L929.6,859.7 L930.9,861.7 L932,863.6 L933,865.6 L933.9,867.7 L934.6,869.9 L935.3,872.3 L935.9,874.9 L936.4,877.6 L936.8,880.5 L937.1,883.4 L937.3,886.5 L937.6,889.8 L937.7,893.4 L937.7,897.6 L937.7,902 L937.6,906 L937.6,909.5 L937.6,912 M840.6,916.3 L842.2,914.7 L844.3,912.5 L846.8,909.9 L849.5,907 L852.1,904 L854.4,901 L856.4,897.9 L858.2,894.7 L860,891.3 L861.7,887.8 L863.4,884.4 L865.1,881 L866.9,877.7 L868.7,874.2 L870.4,870.8 L872.1,867.4 L873.6,864.2 L874.9,861.1 L876.1,858.3 L877,855.5 L877.9,852.9 L878.6,850.5 L879.2,848.1 L879.9,845.8 L880.4,843.6 L880.8,841.4 L881.1,839.4 L881.4,837.5 L881.8,835.7 L882.3,834.1 L882.9,832.7 L883.4,831.3 L884,830.1 L884.7,829.1 L885.6,828.4 L886.6,828 L887.8,828.1 L889.2,828.5 L890.7,829.2 L892.3,830.1 L894,831.2 L895.8,832.3 L897.6,833.5 L899.6,834.9 L901.6,836.4 L903.7,838 L905.9,839.6 L908,841.2 L910.3,842.8 L912.7,844.4 L915.1,846.1 L917.5,847.8 L919.7,849.5 L921.8,851.3 L923.8,853.1 L925.7,855 L927.4,856.8 L929.1,858.8 L930.6,860.7 L932,862.6 L933.2,864.6 L934.3,866.5 L935.2,868.4 L936.1,870.4 L936.8,872.6 L937.5,874.9 L938.1,877.4 L938.5,880 L938.9,882.8 L939.2,885.6 L939.4,888.6 L939.6,891.8 L939.7,895.3 L939.8,899.4 L939.8,903.5 L939.7,907.5 L939.6,910.8 L939.6,913.2 M846.1,917.4 L847.6,915.9 L849.6,913.8 L852.1,911.2 L854.7,908.5 L857.2,905.5 L859.4,902.6 L861.3,899.7 L863.1,896.6 L864.8,893.3 L866.5,890 L868.1,886.7 L869.8,883.4 L871.4,880.1 L873.2,876.8 L874.8,873.5 L876.5,870.2 L877.9,867.1 L879.2,864.2 L880.3,861.4 L881.2,858.8 L882,856.3 L882.7,853.9 L883.4,851.6 L884,849.4 L884.5,847.2 L884.9,845.2 L885.2,843.2 L885.5,841.3 L885.9,839.6 L886.3,838.1 L886.9,836.7 L887.4,835.4 L888,834.2 L888.7,833.2 L889.5,832.5 L890.5,832.2 L891.7,832.2 L893,832.7 L894.4,833.4 L896,834.3 L897.7,835.3 L899.4,836.3 L901.1,837.5 L903,838.8 L905,840.3 L907,841.8 L909.1,843.4 L911.2,844.9 L913.4,846.5 L915.7,848 L918,849.7 L920.3,851.3 L922.5,853 L924.5,854.7 L926.4,856.4 L928.2,858.2 L929.9,860 L931.5,861.9 L933,863.7 L934.3,865.6 L935.5,867.5 L936.5,869.4 L937.4,871.2 L938.2,873.2 L939,875.2 L939.6,877.5 L940.2,879.9 L940.6,882.4 L941,885.1 L941.3,887.8 L941.5,890.7 L941.7,893.8 L941.8,897.2 L941.8,901.1 L941.8,905.1 L941.8,908.9 L941.7,912.2 L941.7,914.5 M851.5,918.6 L853,917.1 L855,915.1 L857.3,912.6 L859.8,909.9 L862.3,907.1 L864.4,904.3 L866.2,901.5 L868,898.5 L869.6,895.3 L871.2,892.1 L872.8,888.9 L874.4,885.8 L876,882.6 L877.7,879.4 L879.3,876.2 L880.8,873.1 L882.3,870.1 L883.5,867.2 L884.6,864.5 L885.5,862 L886.2,859.6 L886.9,857.3 L887.5,855.1 L888.1,852.9 L888.6,850.9 L889,848.9 L889.3,847 L889.6,845.2 L889.9,843.6 L890.4,842.1 L890.9,840.7 L891.4,839.4 L892,838.3 L892.6,837.4 L893.4,836.7 L894.4,836.4 L895.5,836.4 L896.8,836.8 L898.2,837.5 L899.7,838.4 L901.3,839.3 L902.9,840.4 L904.7,841.5 L906.5,842.8 L908.4,844.2 L910.3,845.6 L912.3,847.2 L914.4,848.6 L916.4,850.1 L918.7,851.7 L920.9,853.2 L923.1,854.8 L925.2,856.4 L927.2,858.1 L929,859.8 L930.8,861.5 L932.4,863.2 L933.9,865 L935.3,866.8 L936.6,868.6 L937.8,870.4 L938.8,872.2 L939.7,874 L940.4,875.9 L941.1,877.9 L941.8,880.1 L942.3,882.4 L942.7,884.8 L943.1,887.4 L943.4,890 L943.6,892.8 L943.8,895.8 L943.9,899.1 L943.9,902.8 L943.9,906.7 L943.8,910.4 L943.8,913.5 L943.8,915.7 M857,919.8 L858.4,918.3 L860.3,916.3 L862.6,914 L865,911.4 L867.3,908.7 L869.4,906 L871.1,903.3 L872.8,900.3 L874.4,897.3 L876,894.2 L877.5,891.2 L879,888.1 L880.6,885.1 L882.2,882 L883.7,878.9 L885.2,875.9 L886.6,873 L887.8,870.2 L888.8,867.7 L889.7,865.2 L890.4,862.9 L891.1,860.7 L891.6,858.6 L892.2,856.5 L892.7,854.5 L893,852.6 L893.3,850.8 L893.6,849 L894,847.5 L894.4,846.1 L894.9,844.7 L895.4,843.5 L895.9,842.4 L896.6,841.5 L897.3,840.9 L898.2,840.6 L899.3,840.6 L900.6,841 L901.9,841.6 L903.4,842.5 L904.9,843.4 L906.5,844.4 L908.2,845.5 L909.9,846.7 L911.7,848.1 L913.6,849.5 L915.6,850.9 L917.5,852.4 L919.5,853.8 L921.6,855.3 L923.8,856.8 L925.9,858.3 L928,859.9 L929.9,861.5 L931.6,863.1 L933.3,864.7 L934.9,866.4 L936.4,868.1 L937.7,869.9 L939,871.6 L940,873.4 L941,875.1 L941.9,876.8 L942.6,878.6 L943.3,880.5 L943.9,882.6 L944.4,884.9 L944.8,887.2 L945.2,889.7 L945.4,892.2 L945.7,894.9 L945.8,897.8 L945.9,900.9 L946,904.6 L945.9,908.3 L945.9,911.9 L945.8,914.9 L945.8,917 M862.5,920.9 L863.8,919.5 L865.6,917.6 L867.8,915.4 L870.2,912.9 L872.4,910.3 L874.4,907.7 L876.1,905 L877.7,902.2 L879.2,899.3 L880.7,896.4 L882.2,893.4 L883.6,890.5 L885.1,887.6 L886.7,884.6 L888.2,881.6 L889.6,878.7 L890.9,875.9 L892.1,873.3 L893.1,870.8 L893.9,868.5 L894.6,866.2 L895.2,864.1 L895.8,862 L896.3,860.1 L896.8,858.2 L897.1,856.3 L897.4,854.5 L897.7,852.9 L898,851.4 L898.4,850 L898.9,848.8 L899.4,847.6 L899.9,846.5 L900.5,845.6 L901.3,845 L902.1,844.7 L903.2,844.8 L904.4,845.2 L905.7,845.8 L907.1,846.6 L908.5,847.5 L910.1,848.4 L911.7,849.5 L913.4,850.7 L915.1,852 L916.9,853.3 L918.8,854.7 L920.6,856.1 L922.6,857.5 L924.6,858.9 L926.7,860.3 L928.8,861.8 L930.7,863.3 L932.6,864.8 L934.2,866.4 L935.8,868 L937.4,869.6 L938.8,871.3 L940.1,872.9 L941.3,874.6 L942.3,876.3 L943.3,877.9 L944.1,879.6 L944.8,881.3 L945.5,883.2 L946,885.2 L946.5,887.3 L946.9,889.6 L947.3,892 L947.5,894.5 L947.7,897 L947.9,899.7 L948,902.8 L948,906.3 L948,909.9 L948,913.3 L947.9,916.2 L947.9,918.3 M867.9,922.1 L869.2,920.7 L871,918.9 L873.1,916.7 L875.3,914.3 L877.5,911.8 L879.4,909.4 L881,906.8 L882.5,904.1 L884,901.3 L885.4,898.5 L886.8,895.6 L888.2,892.9 L889.7,890.1 L891.2,887.2 L892.6,884.4 L894,881.6 L895.3,878.9 L896.4,876.3 L897.3,874 L898.1,871.7 L898.8,869.6 L899.4,867.5 L899.9,865.5 L900.4,863.6 L900.9,861.8 L901.2,860 L901.5,858.3 L901.7,856.8 L902.1,855.3 L902.5,854 L902.9,852.8 L903.4,851.6 L903.9,850.6 L904.5,849.8 L905.2,849.2 L906,848.9 L907,849 L908.2,849.3 L909.4,849.9 L910.8,850.7 L912.2,851.6 L913.6,852.5 L915.2,853.5 L916.8,854.6 L918.5,855.8 L920.2,857.2 L922,858.5 L923.8,859.8 L925.7,861.2 L927.6,862.5 L929.6,863.9 L931.6,865.3 L933.5,866.7 L935.2,868.2 L936.8,869.7 L938.4,871.2 L939.8,872.8 L941.2,874.4 L942.5,876 L943.6,877.6 L944.6,879.2 L945.5,880.8 L946.3,882.4 L947,884.1 L947.6,885.8 L948.2,887.8 L948.7,889.8 L949,892 L949.4,894.3 L949.6,896.7 L949.8,899.1 L950,901.7 L950.1,904.7 L950.1,908 L950.1,911.5 L950,914.8 L950,917.5 L950,919.5 M873.4,923.2 L874.6,921.9 L876.3,920.2 L878.3,918.1 L880.5,915.8 L882.5,913.4 L884.3,911 L885.9,908.6 L887.4,906 L888.8,903.4 L890.2,900.6 L891.5,897.9 L892.9,895.2 L894.2,892.5 L895.7,889.8 L897,887.1 L898.4,884.4 L899.6,881.8 L900.7,879.4 L901.5,877.1 L902.3,874.9 L903,872.9 L903.5,870.9 L904.1,869 L904.5,867.2 L905,865.4 L905.3,863.7 L905.6,862.1 L905.8,860.6 L906.1,859.2 L906.5,858 L906.9,856.8 L907.4,855.7 L907.9,854.7 L908.4,853.9 L909.1,853.4 L909.9,853.1 L910.9,853.1 L912,853.5 L913.2,854 L914.5,854.8 L915.8,855.6 L917.2,856.5 L918.7,857.5 L920.2,858.5 L921.9,859.7 L923.5,861 L925.2,862.3 L927,863.6 L928.7,864.8 L930.6,866.1 L932.5,867.5 L934.4,868.8 L936.2,870.2 L937.9,871.6 L939.5,873 L940.9,874.5 L942.3,876 L943.6,877.5 L944.8,879 L945.9,880.6 L946.9,882.1 L947.8,883.7 L948.5,885.2 L949.2,886.8 L949.8,888.5 L950.3,890.3 L950.8,892.3 L951.2,894.4 L951.5,896.6 L951.7,898.9 L951.9,901.2 L952,903.7 L952.1,906.6 L952.2,909.8 L952.1,913.1 L952.1,916.2 L952.1,918.9 L952,920.8 M878.8,924.4 L880,923.1 L881.6,921.5 L883.6,919.5 L885.6,917.3 L887.6,915 L889.3,912.7 L890.8,910.4 L892.2,907.9 L893.6,905.4 L894.9,902.8 L896.2,900.1 L897.5,897.6 L898.8,895 L900.2,892.4 L901.5,889.8 L902.8,887.2 L903.9,884.8 L904.9,882.4 L905.8,880.3 L906.5,878.2 L907.1,876.2 L907.7,874.3 L908.2,872.5 L908.7,870.8 L909.1,869.1 L909.4,867.5 L909.6,865.9 L909.9,864.5 L910.2,863.1 L910.5,861.9 L910.9,860.8 L911.4,859.8 L911.8,858.8 L912.4,858.1 L913,857.5 L913.8,857.3 L914.7,857.3 L915.8,857.6 L916.9,858.2 L918.1,858.9 L919.4,859.7 L920.8,860.5 L922.2,861.4 L923.7,862.5 L925.2,863.6 L926.8,864.8 L928.5,866.1 L930.1,867.3 L931.8,868.5 L933.6,869.7 L935.4,871 L937.3,872.3 L939,873.6 L940.6,875 L942.1,876.3 L943.5,877.8 L944.8,879.2 L946.1,880.6 L947.2,882.1 L948.3,883.6 L949.2,885.1 L950,886.5 L950.7,888 L951.4,889.5 L952,891.2 L952.5,892.9 L952.9,894.8 L953.3,896.8 L953.5,898.9 L953.8,901.1 L954,903.4 L954.1,905.7 L954.2,908.4 L954.2,911.5 L954.2,914.7 L954.2,917.7 L954.1,920.2 L954.1,922 M884.3,925.5 L885.4,924.4 L887,922.8 L888.8,920.9 L890.8,918.8 L892.7,916.6 L894.3,914.4 L895.7,912.2 L897.1,909.8 L898.4,907.4 L899.6,904.9 L900.9,902.4 L902.1,899.9 L903.4,897.5 L904.7,895 L905.9,892.5 L907.1,890 L908.2,887.7 L909.2,885.5 L910,883.4 L910.7,881.4 L911.3,879.5 L911.9,877.7 L912.3,876 L912.8,874.4 L913.2,872.7 L913.5,871.2 L913.7,869.7 L913.9,868.3 L914.2,867 L914.6,865.9 L915,864.8 L915.4,863.8 L915.8,862.9 L916.3,862.2 L916.9,861.7 L917.7,861.4 L918.6,861.5 L919.6,861.8 L920.7,862.3 L921.8,863 L923.1,863.8 L924.4,864.6 L925.7,865.4 L927.1,866.4 L928.6,867.5 L930.1,868.7 L931.7,869.8 L933.2,871 L934.9,872.2 L936.6,873.4 L938.4,874.6 L940.1,875.8 L941.7,877.1 L943.3,878.4 L944.7,879.7 L946,881 L947.3,882.4 L948.5,883.8 L949.6,885.2 L950.6,886.6 L951.5,888 L952.3,889.4 L953,890.8 L953.6,892.2 L954.1,893.8 L954.6,895.5 L955,897.3 L955.4,899.2 L955.6,901.2 L955.9,903.3 L956,905.5 L956.2,907.7 L956.3,910.3 L956.3,913.2 L956.3,916.3 L956.2,919.1 L956.2,921.6 L956.2,923.3 M889.8,926.7 L890.8,925.6 L892.3,924 L894.1,922.2 L895.9,920.2 L897.7,918.2 L899.3,916.1 L900.7,914 L902,911.7 L903.2,909.4 L904.4,907 L905.5,904.6 L906.7,902.3 L907.9,900 L909.2,897.6 L910.4,895.2 L911.5,892.9 L912.6,890.6 L913.5,888.5 L914.3,886.5 L914.9,884.7 L915.5,882.9 L916,881.1 L916.5,879.5 L916.9,877.9 L917.3,876.4 L917.5,874.9 L917.8,873.5 L918,872.2 L918.3,871 L918.6,869.9 L919,868.9 L919.4,867.9 L919.8,867.1 L920.3,866.4 L920.9,865.9 L921.6,865.6 L922.4,865.7 L923.4,866 L924.4,866.5 L925.5,867.1 L926.7,867.8 L927.9,868.6 L929.2,869.4 L930.6,870.4 L932,871.4 L933.4,872.5 L934.9,873.6 L936.4,874.7 L938,875.8 L939.6,877 L941.3,878.1 L942.9,879.3 L944.5,880.5 L945.9,881.7 L947.3,883 L948.6,884.3 L949.8,885.6 L950.9,886.9 L952,888.2 L952.9,889.6 L953.8,890.9 L954.5,892.2 L955.2,893.6 L955.8,895 L956.3,896.5 L956.8,898.1 L957.2,899.8 L957.5,901.6 L957.7,903.5 L957.9,905.5 L958.1,907.6 L958.2,909.7 L958.3,912.2 L958.3,915 L958.3,917.9 L958.3,920.6 L958.3,922.9 L958.2,924.6 M895.2,927.8 L896.2,926.8 L897.6,925.3 L899.3,923.6 L901.1,921.7 L902.8,919.7 L904.3,917.8 L905.6,915.8 L906.8,913.6 L908,911.4 L909.1,909.1 L910.2,906.9 L911.3,904.7 L912.5,902.4 L913.7,900.2 L914.8,897.9 L915.9,895.7 L916.9,893.6 L917.8,891.6 L918.5,889.7 L919.2,887.9 L919.7,886.2 L920.2,884.6 L920.6,883 L921,881.5 L921.4,880 L921.6,878.6 L921.8,877.3 L922.1,876 L922.3,874.9 L922.6,873.8 L923,872.9 L923.4,872 L923.8,871.2 L924.2,870.5 L924.8,870 L925.4,869.8 L926.2,869.8 L927.1,870.1 L928.1,870.6 L929.2,871.2 L930.3,871.9 L931.5,872.6 L932.7,873.4 L934,874.3 L935.3,875.3 L936.7,876.3 L938.1,877.4 L939.5,878.5 L941,879.5 L942.6,880.6 L944.2,881.7 L945.7,882.8 L947.2,884 L948.6,885.1 L949.9,886.3 L951.1,887.5 L952.3,888.8 L953.4,890 L954.4,891.3 L955.3,892.6 L956.1,893.8 L956.8,895.1 L957.4,896.4 L958,897.7 L958.5,899.1 L958.9,900.6 L959.3,902.3 L959.6,904 L959.8,905.8 L960,907.7 L960.2,909.7 L960.3,911.7 L960.4,914.1 L960.4,916.7 L960.4,919.5 L960.4,922.1 L960.3,924.3 L960.3,925.8" stroke="#0556b6" stroke-width="1.3" fill="none"/></g>
<g clip-path="url(#bc)"><path d="M616,544 C617.8,546 624.9,548.5 637,556 C649.1,563.5 670,578 686.5,589 C703,600 722.1,611 735.8,622 C749.5,633 759.9,644 768.7,655 C777.5,666 783.2,676.5 788.4,688 C793.6,699.5 797.8,708.2 800,724 C802.2,739.8 801.2,773.2 801.5,783" stroke="#0474ea" stroke-width="14" stroke-opacity="0.55" fill="none"/></g>
<path d="M616,544 C617.8,546 624.9,548.5 637,556 C649.1,563.5 670,578 686.5,589 C703,600 722.1,611 735.8,622 C749.5,633 759.9,644 768.7,655 C777.5,666 783.2,676.5 788.4,688 C793.6,699.5 797.8,708.2 800,724 C802.2,739.8 801.2,773.2 801.5,783" stroke="#0558bc" stroke-width="1.3" fill="none"/>
<path d="M611,724 L606,783 L616,783 Z" fill="#0852a6"/>
<path d="M440,548 L446,783 L473,783 L469,548 Z" fill="url(#cyl)"/>
<path d="M440,548 L446,783 L473,783 L469,548 Z" fill="url(#stp)"/>
<path d="M467,552 L471.5,783" stroke="#0754b0" stroke-width="2.5" fill="none"/>
<ellipse cx="454.5" cy="548" rx="14.5" ry="6.5" fill="#0a6ee0"/>
<ellipse cx="453" cy="548" rx="6.5" ry="4" fill="#00e4e8"/>
<ellipse cx="453" cy="548" rx="2.5" ry="1.6" fill="#0a9ab8"/>
<path d="M101,519 L133,520 L143.6,640 L146,783 L116,783 L112.6,640 L109.6,600 L104.6,551 Z" fill="url(#cyl)"/>
<path d="M101,519 L133,520 L143.6,640 L146,783 L116,783 L112.6,640 L109.6,600 L104.6,551 Z" fill="url(#stp)"/>
<path d="M133,520 L143.6,640 L146,783" stroke="#0754b0" stroke-width="2.5" fill="none"/>
<ellipse cx="115" cy="515.5" rx="14" ry="6.5" fill="#0a6ee0"/>
<ellipse cx="115.5" cy="516" rx="6.5" ry="4" fill="#00e4e8"/>
<ellipse cx="320" cy="59.5" rx="6.5" ry="4" fill="#00e4e8"/>
<ellipse cx="613.2" cy="82.3" rx="6.5" ry="4" fill="#00e4e8"/>
<path d="M104.7,728 L110,724.5 L116,724.5 L116,755.5 L104.7,755.5 Z" fill="#0a6ee0"/>
<path d="M112,728 L116,727 L116,736 L112,736 Z" fill="#00e4e8"/>
<path d="M483.7,783 C484.2,775.8 485.6,754.2 487,740 C488.4,725.8 489.6,711.9 492.3,697.7 C495,683.5 499.1,666.5 503,654.6 C506.9,642.8 511.3,634 516,626.6 C520.7,619.2 527.4,613.4 531,610.5 C534.6,607.6 535,607.8 537.5,609 C540,610.2 543.9,614 546,618 C548.1,622 549.5,626.9 550.4,633 C551.3,639.1 552.2,646.7 551.5,654.6 C550.8,662.5 548.7,673.6 546,680.4 C543.3,687.2 537.2,693 535.4,695.5 L529,691 C529,687.1 528.7,676.1 529,667.5 C529.3,658.9 531.7,646 531,639.5 C530.3,633 526.8,630 524.6,628.8 C522.4,627.5 520.4,628.5 518,632 C515.6,635.5 512.3,639.2 510,650 C507.7,660.8 505.8,682 504,697 C502.2,712 500.2,725.7 499,740 C497.8,754.3 497,775.8 496.6,783 Z" fill="url(#wL)"/>
<path d="M533,690 L538,688" stroke="#34ec84" stroke-width="3"/>
<path d="M504.5,234 L504.5,385 L521.8,396.5 L540.5,389 L541.5,234 Z" fill="#565656"/>
<path d="M527,234 L527,392 L521.8,396.5 L540.5,389 L541.5,234 Z" fill="#4c4c4c"/>
<path d="M510,388 L521.8,396.5 L532,392 Z" fill="#333"/>
<ellipse cx="523" cy="234" rx="18.5" ry="8" fill="#686868"/>
</svg>
<div class="b" style="left:0;top:783px;width:1217px;height:1px;background:#fbfbfb"></div>
<div class="b" style="left:0;top:790px;width:1217px;height:1px;background:#e2e2e2"></div>
<div class="b" style="left:-10px;top:808px;width:59px;height:81px;border:1px solid #dcdcdc"></div>
<div class="b" style="left:-5px;top:827px;width:43px;height:20px;border:1px solid #adadad;background:#e1e1e1"></div>
<div class="b" style="left:24px;top:834px;width:0;height:0;border-left:4px solid transparent;border-right:4px solid transparent;border-top:5px solid #000"></div>
<div class="t" style="left:-1px;top:860px">rs</div>
<div class="b" style="left:61px;top:808px;width:1155px;height:81px;border:1px solid #dcdcdc"></div>
<div class="t" style="left:67px;top:803px;background:#f0f0f0;padding:0 2px">Intervallo di livelli da mostrare</div>
<div class="t" style="left:72px;top:833px">Min</div>
<div class="t" style="left:72px;top:861px">Max</div>
<div class="b" style="left:108px;top:836px;width:1038px;height:4px;background:#e7e7e7;border:1px solid #d6d6d6"></div>
<div class="b" style="left:108px;top:864px;width:1038px;height:4px;background:#e7e7e7;border:1px solid #d6d6d6"></div>
<div class="b" style="left:108px;top:828px;width:10px;height:21px;background:#0078d7"></div>
<div class="b" style="left:1032px;top:856px;width:10px;height:21px;background:#0078d7"></div>
<div class="b" style="left:1161px;top:829px;width:43px;height:20px;border:1px solid #7a7a7a;background:#fff"></div>
<div class="t" style="left:1165px;top:833px">1</div>
<div class="b" style="left:1161px;top:857px;width:43px;height:20px;border:1px solid #0078d7;background:#fff"></div>
<div class="t" style="left:1164px;top:861px;background:#0078d7;color:#fff;height:13px">254</div>
<div class="b" style="left:1188px;top:830px;width:14px;height:17px;border:1px solid #c8c8c8;background:#f0f0f0"></div>
<div class="b" style="left:1191px;top:832px;width:0;height:0;border-left:4px solid transparent;border-right:4px solid transparent;border-bottom:4px solid #000"></div>
<div class="b" style="left:1191px;top:840px;width:0;height:0;border-left:4px solid transparent;border-right:4px solid transparent;border-top:4px solid #000"></div>
<div class="b" style="left:1188px;top:858px;width:14px;height:17px;border:1px solid #c8c8c8;background:#f0f0f0"></div>
<div class="b" style="left:1191px;top:860px;width:0;height:0;border-left:4px solid transparent;border-right:4px solid transparent;border-bottom:4px solid #000"></div>
<div class="b" style="left:1191px;top:868px;width:0;height:0;border-left:4px solid transparent;border-right:4px solid transparent;border-top:4px solid #000"></div>
</body></html>
